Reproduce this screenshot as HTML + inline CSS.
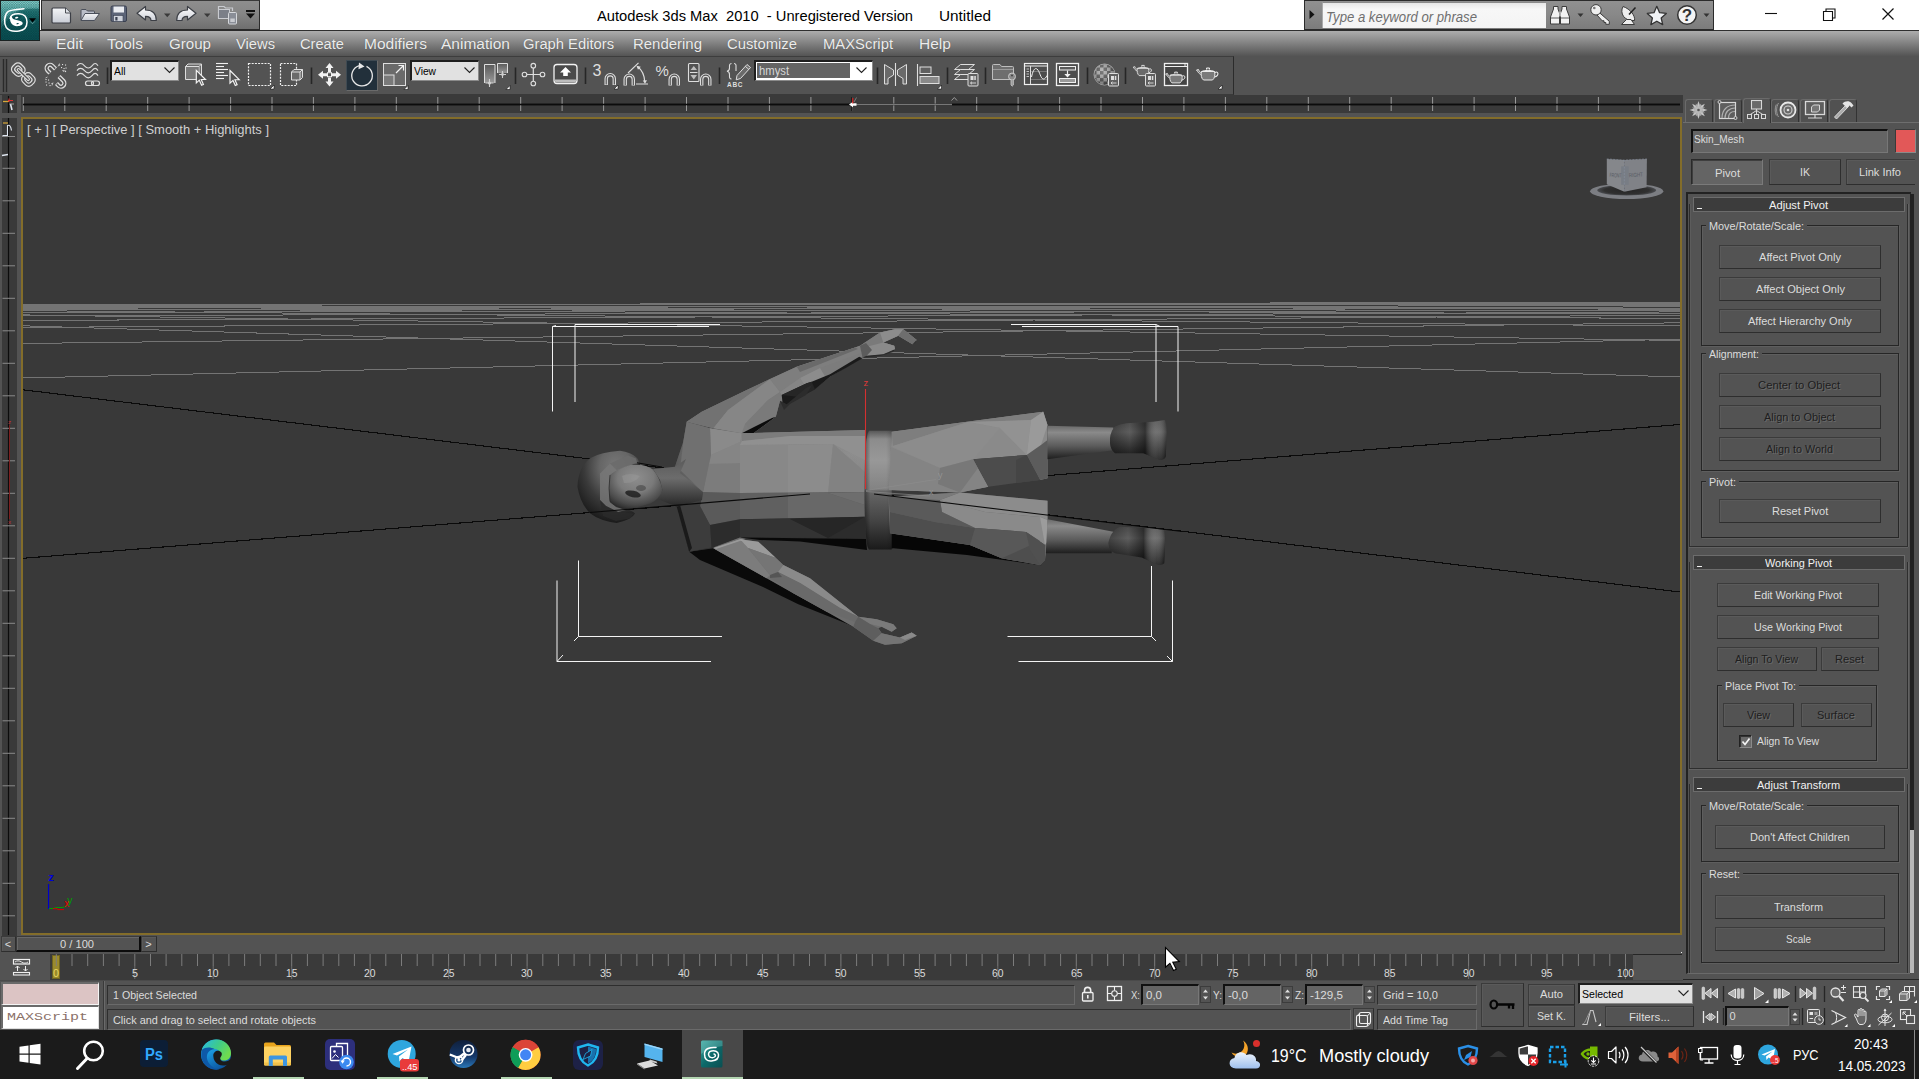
<!DOCTYPE html>
<html lang="en"><head><meta charset="utf-8"><title>Autodesk 3ds Max 2010 - Untitled</title>
<style>
html,body{margin:0;padding:0;background:#535353;overflow:hidden;}
#root{position:relative;width:1919px;height:1079px;background:#535353;overflow:hidden;font-family:"Liberation Sans",sans-serif;}
#root div,#root span.t,#root svg{position:absolute;box-sizing:border-box;}
span.t{white-space:pre;transform-origin:0 50%;}
.btn{background:#535353;border:1px solid #3b3b3b;border-right-color:#2e2e2e;border-bottom-color:#2e2e2e;box-shadow:inset 1px 1px 0 #5a5a5a;}
.grp{border:1px solid #262626;box-shadow:inset 1px 1px 0 #5e5e5e, 1px 1px 0 #5e5e5e;}
.fld{background:#646464;border:2px solid #111;border-right:1px solid #777;border-bottom:1px solid #777;}

</style></head>
<body>
<div id="root">
<div style="left:0px;top:0px;width:1919px;height:30px;background:#fff;"></div>
<div style="left:0px;top:30px;width:1919px;height:26px;background:linear-gradient(#2f2f2f 0,#2f2f2f 1px,#adadad 1px,#545454 26px);"></div>
<div style="left:0px;top:0px;width:40px;height:41px;background:#1a2222;"></div>
<div style="left:1px;top:1px;width:38px;height:39px;background:linear-gradient(180deg,#7ccfca 0%,#58b3af 14%,#2f8f8e 30%,#126467 55%,#0b5357 100%);"></div>
<svg style="left:0;top:0" width="41" height="41" viewBox="0 0 41 41">
<defs><pattern id="hx" width="2.400" height="2.400" patternUnits="userSpaceOnUse"><path d="M0 2.400L2.400 0M0 0L2.400 2.400" stroke="#062f32" stroke-width="0.450" opacity=".6"/></pattern></defs>
<path d="M1 1H39V8.500C31 8 22 9 14 14C8 18 3 24 1 30Z" fill="#a9e6e1" opacity=".30"/>
<path d="M1 24C6 16 15 10 26 8.500L39 8.500V40H1Z" fill="#064448" opacity=".35"/>
<rect x="1" y="1" width="38" height="39" fill="url(#hx)"/>
<path d="M23.900 8.800C17 9.200 10.500 9.300 7.500 12C4 15.500 3.800 24 6.300 27.500C9 31 15 31.600 19 31C24 30.300 27 27 27 22C27 17 24.500 14 19 13.700C14 13.500 10.600 15.500 10.100 18.500" fill="none" stroke="#fff" stroke-width="1.500" stroke-linecap="round"/>
<path d="M10 17.500C9.700 22.500 12.500 26.200 17 26.200C20.500 26.200 22.900 24.500 22.700 23C22.500 21.500 20 20.800 17.500 20.300C14.500 19.700 12.300 19 12 17C11.800 15.800 10.500 15.800 10 17.500Z" fill="#fff"/>
<path d="M12.200 17.800C14 15.300 18.500 14.800 21.300 16.800C19.500 19.300 15 20.300 12.200 17.800Z" fill="#0b4a4e"/>
<ellipse cx="16.700" cy="17.700" rx="1.700" ry=".9" fill="#fff" transform="rotate(-12 16.700 17.700)"/>
<ellipse cx="17.600" cy="23.600" rx="1.300" ry=".6" fill="#0b4a4e" transform="rotate(-15 17.600 23.600)"/>
<path d="M29 18.200H36L32.500 22.300Z" fill="#000"/><path d="M30 21.300L32.500 23.800L35 21.300" stroke="#cfeeee" stroke-width=".6" fill="none" opacity=".7"/>
</svg>
<div style="left:41px;top:0px;width:219px;height:31px;background:linear-gradient(#8e8e8e 0%,#868686 45%,#6f6f6f 100%);border:1px solid #2a2a2a;border-width:1px 1px 2px 1px;border-top-color:#3a3a3a;"></div>
<svg style="left:41px;top:0" width="219" height="30" viewBox="41 0 219 30">
<defs><linearGradient id="pg" x1="0" y1="0" x2="0" y2="1"><stop offset="0" stop-color="#f4f5f7"/><stop offset="1" stop-color="#c9cdd6"/></linearGradient>
<linearGradient id="ag" x1="0" y1="0" x2="0" y2="1"><stop offset="0" stop-color="#ffffff"/><stop offset="1" stop-color="#cfd2da"/></linearGradient></defs>
<!-- new -->
<path d="M52 9Q52 8 53 8H65.500L70.500 13V22Q70.500 23 69.500 23H53Q52 23 52 22Z" fill="url(#pg)" stroke="#3c3f46" stroke-width="1.200"/>
<path d="M65.500 8V13H70.500" fill="#dfe2e8" stroke="#3c3f46" stroke-width=".9"/>
<!-- open -->
<path d="M81 20V10.500Q81 9.500 82 9.500H86L87.500 11H93.500Q94.500 11 94.500 12V13.500" fill="#b9bdc8" stroke="#4a4f5a" stroke-width="1"/>
<path d="M81 20.500L85 13.500H99.500L94.500 20.500Z" fill="url(#pg)" stroke="#4a4f5a" stroke-width="1"/>
<!-- save -->
<rect x="111" y="6" width="15.500" height="15.500" rx="1.500" fill="#5c6478" stroke="#3a4050" stroke-width="1"/>
<rect x="113.500" y="6.500" width="10.500" height="6" fill="#e9ebf0"/>
<rect x="113.500" y="15.500" width="9.500" height="6" fill="#cfd3dc" stroke="#3a4050" stroke-width=".6"/>
<rect x="115.300" y="17" width="2.200" height="3.500" fill="#3a4050"/>
<!-- undo -->
<path d="M137 13.300L145.500 6.500V10C152.500 10 156.300 13.500 156.300 20.500H151C151 17.500 149.500 16.300 145.500 16.300V20Z" fill="url(#ag)" stroke="#3c3f46" stroke-width="1.200" stroke-linejoin="round"/>
<path d="M164 13.500H170.500L167.250 17.300Z" fill="#3a3a3a"/>
<!-- redo -->
<path d="M196 13.300L187.500 6.500V10C180.500 10 176.700 13.500 176.700 20.500H182C182 17.500 183.500 16.300 187.500 16.300V20Z" fill="url(#ag)" stroke="#3c3f46" stroke-width="1.200" stroke-linejoin="round"/>
<path d="M204 13.500H210.500L207.250 17.300Z" fill="#3a3a3a"/>
<!-- project folder -->
<path d="M218.500 18.500V6.500H224L225.500 8H232.500V11" fill="none" stroke="#c9cbd0" stroke-width="1.2"/>
<rect x="218.500" y="9.500" width="11" height="9" fill="#7b7f88" stroke="#c9cbd0" stroke-width="1"/>
<rect x="228.500" y="12.500" width="8" height="11.500" rx="1" fill="#8a8e97" stroke="#d6d8dc" stroke-width="1"/>
<rect x="230.300" y="18.500" width="4.500" height="3.500" fill="#c9cbd0"/>
<!-- dropdown -->
<rect x="246" y="10" width="9" height="2" fill="#111"/><path d="M246 13.500H255L250.500 18.500Z" fill="#111"/>
</svg>
<span class="t" style="left:597.00px;top:6.13px;font-size:15.5px;line-height:19px;color:#000;font-family:'Liberation Sans',sans-serif;transform:scaleX(0.9478);">Autodesk 3ds Max  2010  - Unregistered Version</span>
<span class="t" style="left:939.00px;top:6.13px;font-size:15.5px;line-height:19px;color:#000;font-family:'Liberation Sans',sans-serif;transform:scaleX(0.9895);">Untitled</span>
<div style="left:1304px;top:0px;width:410px;height:31px;background:linear-gradient(#909090,#888 50%,#7c7c7c);border:1px solid #2b2b2b;border-bottom-width:2px;"></div>
<div style="left:1322px;top:2px;width:224px;height:26px;background:linear-gradient(#e6e6e6,#f7f7f7 25%,#f4f4f4);border-top:1px solid #8a8a8a;border-left:1px solid #aaa;"></div>
<span class="t" style="left:1326.00px;top:9.15px;font-size:14px;line-height:17px;color:#6f6f6f;font-family:'Liberation Sans',sans-serif;font-style:italic;transform:scaleX(0.9390);">Type a keyword or phrase</span>
<svg style="left:1304px;top:0" width="411" height="30" viewBox="1304 0 411 30">
<path d="M1309.500 10L1314.500 14.500L1309.500 19Z" fill="#111"/>
<!-- binoculars -->
<g stroke="#3c3c3c" stroke-width="1" fill="#f2f2f2" stroke-linejoin="round">
<path d="M1553.500 9V6.500H1558V9L1559.500 13V24H1550.500V17Z"/><path d="M1562 9V6.500H1566.500V9L1569.500 17V24H1560.500V13Z"/>
<rect x="1559.300" y="11.500" width="1.500" height="5" fill="#ccc" stroke="none"/>
<path d="M1551 18H1559M1561 18H1569" stroke="#5a5a5a" stroke-width="1"/>
</g>
<path d="M1577.500 13.500H1583.500L1580.500 17Z" fill="#333"/>
<!-- key -->
<g stroke="#3c3c3c" stroke-width="1" fill="#eeeeee" stroke-linejoin="round">
<path d="M1599 12.300L1609.300 21.300V24.300H1605.800V22.500H1604V20.800H1602.200L1597 15Z"/>
<circle cx="1596" cy="9.800" r="5.200"/>
<circle cx="1594.300" cy="8" r="1.300" fill="#777" stroke="none"/>
</g>
<!-- satellite dish -->
<g stroke="#3c3c3c" stroke-width="1" fill="#eeeeee" stroke-linejoin="round">
<path d="M1623 6.500C1619.500 13 1624 21.500 1634.500 20.500C1635.500 16 1630.500 9 1623 6.500Z"/>
<path d="M1629 14.500L1635.500 7.500" stroke="#222" stroke-width="1.500" fill="none"/>
<path d="M1621.500 24.500L1626.500 19.500H1631L1634.500 24.500Z"/>
</g>
<!-- star -->
<path d="M1656.800 6.300L1659.600 12.700L1666.300 13.400L1661.200 18L1662.700 24.600L1656.800 21.200L1650.900 24.600L1652.400 18L1647.300 13.400L1654 12.700Z" fill="#f0f2f5" stroke="#333" stroke-width="1.300" stroke-linejoin="round"/>
<!-- help -->
<circle cx="1687" cy="15" r="9.300" fill="#f4f4f4" stroke="#333" stroke-width="1.500"/>
<text x="1687" y="21.300" text-anchor="middle" font-family="Liberation Sans,sans-serif" font-size="17" font-weight="bold" fill="#333">?</text>
<path d="M1703.500 13.500H1709.500L1706.500 17Z" fill="#333"/>
</svg>
<svg style="left:1740px;top:0" width="179" height="30" viewBox="1740 0 179 30">
<path d="M1765 13.500H1777" stroke="#111" stroke-width="1.100"/>
<path d="M1823.500 11.500H1832.500V20.500H1823.500Z" fill="none" stroke="#111" stroke-width="1.100"/><path d="M1826 11.500V9H1835V18H1832.500" fill="none" stroke="#111" stroke-width="1.100"/>
<path d="M1882.500 8.500L1893.500 19.500M1893.500 8.500L1882.500 19.500" stroke="#111" stroke-width="1.200"/>
</svg>
<span class="t" style="left:56.00px;top:34.13px;font-size:15.5px;line-height:19px;color:#ececec;font-family:'Liberation Sans',sans-serif;transform:scaleX(1.0109);text-shadow:0 0 1px rgba(0,0,0,.35);">Edit</span>
<span class="t" style="left:107.00px;top:34.13px;font-size:15.5px;line-height:19px;color:#ececec;font-family:'Liberation Sans',sans-serif;transform:scaleX(0.9949);text-shadow:0 0 1px rgba(0,0,0,.35);">Tools</span>
<span class="t" style="left:169.00px;top:34.13px;font-size:15.5px;line-height:19px;color:#ececec;font-family:'Liberation Sans',sans-serif;transform:scaleX(0.9750);text-shadow:0 0 1px rgba(0,0,0,.35);">Group</span>
<span class="t" style="left:236.00px;top:34.13px;font-size:15.5px;line-height:19px;color:#ececec;font-family:'Liberation Sans',sans-serif;transform:scaleX(0.9497);text-shadow:0 0 1px rgba(0,0,0,.35);">Views</span>
<span class="t" style="left:300.00px;top:34.13px;font-size:15.5px;line-height:19px;color:#ececec;font-family:'Liberation Sans',sans-serif;transform:scaleX(0.9458);text-shadow:0 0 1px rgba(0,0,0,.35);">Create</span>
<span class="t" style="left:364.00px;top:34.13px;font-size:15.5px;line-height:19px;color:#ececec;font-family:'Liberation Sans',sans-serif;text-shadow:0 0 1px rgba(0,0,0,.35);">Modifiers</span>
<span class="t" style="left:441.00px;top:34.13px;font-size:15.5px;line-height:19px;color:#ececec;font-family:'Liberation Sans',sans-serif;text-shadow:0 0 1px rgba(0,0,0,.35);">Animation</span>
<span class="t" style="left:523.00px;top:34.13px;font-size:15.5px;line-height:19px;color:#ececec;font-family:'Liberation Sans',sans-serif;transform:scaleX(0.9517);text-shadow:0 0 1px rgba(0,0,0,.35);">Graph Editors</span>
<span class="t" style="left:633.00px;top:34.13px;font-size:15.5px;line-height:19px;color:#ececec;font-family:'Liberation Sans',sans-serif;transform:scaleX(0.9648);text-shadow:0 0 1px rgba(0,0,0,.35);">Rendering</span>
<span class="t" style="left:727.00px;top:34.13px;font-size:15.5px;line-height:19px;color:#ececec;font-family:'Liberation Sans',sans-serif;transform:scaleX(0.9561);text-shadow:0 0 1px rgba(0,0,0,.35);">Customize</span>
<span class="t" style="left:823.00px;top:34.13px;font-size:15.5px;line-height:19px;color:#ececec;font-family:'Liberation Sans',sans-serif;transform:scaleX(0.9562);text-shadow:0 0 1px rgba(0,0,0,.35);">MAXScript</span>
<span class="t" style="left:919.00px;top:34.13px;font-size:15.5px;line-height:19px;color:#ececec;font-family:'Liberation Sans',sans-serif;text-shadow:0 0 1px rgba(0,0,0,.35);">Help</span>
<div style="left:0px;top:56px;width:1234px;height:39px;border-top:1px solid #3d3d3d;border-right:1px solid #2b2b2b;border-bottom:1px solid #3a3a3a;background:#535353;"></div>
<div style="left:110px;top:60px;width:69px;height:21px;background:#e1e1e1;border:2px solid #1e1e1e;border-right:1px solid #8a8a8a;border-bottom:1px solid #8a8a8a;"></div>
<span class="t" style="left:113.50px;top:63.82px;font-size:11.5px;line-height:14px;color:#000;font-family:'Liberation Sans',sans-serif;transform:scaleX(0.8998);">All</span>
<svg style="left:163px;top:66px" width="14" height="9" viewBox="0 0 14 9"><path d="M1.500 1.500L6.500 6.500L11.500 1.500" fill="none" stroke="#222" stroke-width="1.100"/></svg>
<div style="left:410px;top:60px;width:69px;height:21px;background:#e1e1e1;border:2px solid #1e1e1e;border-right:1px solid #8a8a8a;border-bottom:1px solid #8a8a8a;"></div>
<span class="t" style="left:413.50px;top:63.82px;font-size:11.5px;line-height:14px;color:#000;font-family:'Liberation Sans',sans-serif;transform:scaleX(0.8900);">View</span>
<svg style="left:463px;top:66px" width="14" height="9" viewBox="0 0 14 9"><path d="M1.500 1.500L6.500 6.500L11.500 1.500" fill="none" stroke="#222" stroke-width="1.100"/></svg>
<div style="left:754px;top:60px;width:119px;height:21px;background:#fff;border:2px solid #1e1e1e;border-right:1px solid #8a8a8a;border-bottom:1px solid #8a8a8a;"></div>
<div style="left:757px;top:63px;width:93px;height:15px;background:#646464;"></div>
<span class="t" style="left:759.00px;top:63.84px;font-size:12px;line-height:14px;color:#d6d6d6;font-family:'Liberation Sans',sans-serif;transform:scaleX(0.9374);">hmyst</span>
<svg style="left:855px;top:66px" width="14" height="9" viewBox="0 0 14 9"><path d="M1.500 1.500L6.500 6.500L11.500 1.500" fill="none" stroke="#222" stroke-width="1.100"/></svg>
<div style="left:346px;top:60px;width:32px;height:31px;background:#22303b;border:1px solid #3f4a52;border-right-color:#6a6a6a;border-bottom-color:#6a6a6a;"></div>
<svg style="left:0;top:56px" width="1240" height="40" viewBox="0 56 1240 40"><path d="M107.5 67.500V84" stroke="#262626" stroke-width="1.600"/><path d="M311.5 67.500V84" stroke="#262626" stroke-width="1.600"/><path d="M515.5 67.500V84" stroke="#262626" stroke-width="1.600"/><path d="M585.5 67.500V84" stroke="#262626" stroke-width="1.600"/><path d="M719.5 67.500V84" stroke="#262626" stroke-width="1.600"/><path d="M877.5 67.500V84" stroke="#262626" stroke-width="1.600"/><path d="M947.5 67.500V84" stroke="#262626" stroke-width="1.600"/><path d="M985.5 67.500V84" stroke="#262626" stroke-width="1.600"/><path d="M1087.5 67.500V84" stroke="#262626" stroke-width="1.600"/><path d="M1125.5 67.500V84" stroke="#262626" stroke-width="1.600"/><path d="M3.500 59V92M6.500 59V92" stroke="#2a2a2a" stroke-width="1.400"/><g transform="translate(18.3 69.6) rotate(45)"><rect x="-6.300" y="-5.800" width="12.600" height="11.600" rx="4.200" fill="none" stroke="#dedede" stroke-width="1.200"/><rect x="-3.400" y="-3" width="6.800" height="6" rx="2.400" fill="none" stroke="#dedede" stroke-width="1.200"/></g><g transform="translate(28.4 79.5) rotate(45)"><rect x="-6.300" y="-5.800" width="12.600" height="11.600" rx="4.200" fill="none" stroke="#dedede" stroke-width="1.200"/><rect x="-3.400" y="-3" width="6.800" height="6" rx="2.400" fill="none" stroke="#dedede" stroke-width="1.200"/></g><path d="M18.500 69.800L28.200 79.300" stroke="#dedede" stroke-width="3.600" stroke-linecap="round"/><path d="M18.500 69.800L28.200 79.300" stroke="#535353" stroke-width="1.300" stroke-linecap="round"/><g fill="none" stroke="#dedede" stroke-width="4.200"><path d="M50 73L47.500 70.500A3.400 3.400 0 0 1 52.300 65.700L55.500 68.900" /><path d="M59 76.500L63.500 81A3.400 3.400 0 0 1 58.700 85.800L56.500 83.600"/></g><g fill="none" stroke="#535353" stroke-width="1.600"><path d="M49.700 72.700L47.500 70.500A3.400 3.400 0 0 1 52.300 65.700L55.200 68.600" /><path d="M59.300 76.800L63.500 81A3.400 3.400 0 0 1 58.700 85.800L56.800 83.900"/></g><g fill="#dedede"><rect x="59" y="64.500" width="1.100" height="1.100"/><rect x="62" y="64" width="1.100" height="1.100"/><rect x="65" y="64.500" width="1.100" height="1.100"/><rect x="61" y="67" width="1.100" height="1.100"/><rect x="63.500" y="68" width="1.100" height="1.100"/><rect x="65.500" y="67.500" width="1.100" height="1.100"/><rect x="62.500" y="70" width="1.100" height="1.100"/><rect x="65" y="71" width="1.100" height="1.100"/><path d="M58 66.500L59.500 63.500M63 71.500L65.500 70.500" stroke="#dedede" stroke-width=".7"/><rect x="45.500" y="79" width="1.100" height="1.100"/><rect x="48" y="79.500" width="1.100" height="1.100"/><rect x="45.500" y="81.500" width="1.100" height="1.100"/><rect x="48.500" y="82.500" width="1.100" height="1.100"/><rect x="46" y="84.500" width="1.100" height="1.100"/><rect x="49.500" y="85" width="1.100" height="1.100"/><rect x="51.500" y="83" width="1.100" height="1.100"/><path d="M45.500 78L47.500 77M52 85.500L53 82.500" stroke="#dedede" stroke-width=".7"/></g><path d="M77 65.8C79 62.8 82 62.8 84.500 65.8S89.500 68.8 92 65.8S96 62.8 98 65.8" fill="none" stroke="#dedede" stroke-width="1.100"/><path d="M77 70.6C79 67.6 82 67.6 84.500 70.6S89.500 73.6 92 70.6S96 67.6 98 70.6" fill="none" stroke="#dedede" stroke-width="1.100"/><path d="M77 75.6C79 72.6 82 72.6 84.500 75.6S89.500 78.6 92 75.6S96 72.6 98 75.6" fill="none" stroke="#dedede" stroke-width="1.100"/><rect x="85.500" y="81" width="8" height="4.500" rx="2.250" fill="none" stroke="#dedede" stroke-width="1.200"/><rect x="91.500" y="81" width="8" height="4.500" rx="2.250" fill="none" stroke="#dedede" stroke-width="1.200"/><path d="M185.500 66.500L188 64H201.500V77L199 79.500H185.500Z" fill="#6a6a6a" stroke="#dedede" stroke-width="1"/><path d="M185.500 66.500H199V79.500M199 66.500L201.500 64" fill="none" stroke="#dedede" stroke-width="1"/><rect x="186" y="67" width="12.500" height="12" fill="#787878"/><path transform="translate(196.3 70.3) scale(1.15)" d="M0 0V11L2.600 8.600L4.600 13L6.200 12.300L4.300 8H8Z" fill="#535353" stroke="#f4f4f4" stroke-width="1"/><path d="M216 63.5H228" stroke="#f0f0f0" stroke-width="1.100"/><path d="M216 66.5H224" stroke="#f0f0f0" stroke-width="1.100"/><path d="M216 69.5H228" stroke="#f0f0f0" stroke-width="1.100"/><path d="M216 72.5H224" stroke="#f0f0f0" stroke-width="1.100"/><path d="M216 75.5H228" stroke="#f0f0f0" stroke-width="1.100"/><path d="M216 78.5H224" stroke="#f0f0f0" stroke-width="1.100"/><path transform="translate(230 70.5) scale(1.15)" d="M0 0V11L2.600 8.600L4.600 13L6.200 12.300L4.300 8H8Z" fill="#535353" stroke="#f4f4f4" stroke-width="1"/><rect x="248.500" y="63.500" width="22" height="22" fill="none" stroke="#f0f0f0" stroke-width="1.200" stroke-dasharray="2 1.200"/><path d="M270 89L274 85V89Z" fill="#fff" stroke="#111" stroke-width=".6"/><rect x="280.500" y="63.500" width="16" height="22" fill="none" stroke="#f0f0f0" stroke-width="1.200" stroke-dasharray="2 1.200"/><path d="M291.500 72L294 69.500H302.500V77.500L300 80H291.500Z" fill="#6a6a6a" stroke="#dedede" stroke-width="1"/><path d="M291.500 72H300V80M300 72L302.500 69.500" fill="none" stroke="#dedede" stroke-width="1"/><g fill="#f2f2f2"><path d="M329.500 63L333.500 68H331V72H328V68H325.500Z"/><path d="M329.500 86.500L333.500 81.500H331V77.500H328V81.500H325.500Z"/><path d="M318 74.700L323 70.700V73.200H327V76.200H323V78.700Z"/><path d="M341 74.700L336 70.700V73.200H332V76.200H336V78.700Z"/></g><rect x="327.500" y="72.700" width="4" height="4" fill="none" stroke="#f2f2f2" stroke-width="1"/><path d="M359.500 65.600A10.300 10.300 0 1 0 366.500 66.300" fill="none" stroke="#e8e8e8" stroke-width="1.300"/><path d="M359 62.500L364.500 66.500L358.500 69.300Z" fill="#e8e8e8"/><rect x="383.500" y="63.500" width="22" height="22" fill="#6a6a6a" stroke="#dedede" stroke-width="1"/><rect x="383.500" y="75" width="10.500" height="10.500" fill="#7a7a7a" stroke="#dedede" stroke-width="1"/><path d="M396 73L403 66M398.500 65.500H403.500V70.500" fill="none" stroke="#f2f2f2" stroke-width="1.200"/><path d="M404 89.5L408 85.5V89.5Z" fill="#fff" stroke="#111" stroke-width=".6"/><defs><linearGradient id="pv" x1="0" y1="0" x2="0" y2="1"><stop offset="0" stop-color="#5a5a5a"/><stop offset="1" stop-color="#9a9a9a"/></linearGradient></defs><path d="M484.500 83V64.500H495V83" fill="url(#pv)" stroke="#dedede" stroke-width="1"/><path d="M497.500 73V63.500H507.500V73" fill="url(#pv)" stroke="#dedede" stroke-width="1"/><path d="M489.500 79V87M485.500 83H493.500M502.500 71V78M499 74.500H506" stroke="#cfcfcf" stroke-width="1.100"/><circle cx="489.500" cy="83" r="1.600" fill="#cfcfcf"/><circle cx="502.500" cy="74.500" r="1.400" fill="#cfcfcf"/><path d="M506 89.5L510 85.5V89.5Z" fill="#fff" stroke="#111" stroke-width=".6"/><path d="M524.500 74.500H542M533.300 65.500V83.500" stroke="#dedede" stroke-width="1.200"/><g fill="#535353" stroke="#dedede" stroke-width="1.100"><circle cx="524.500" cy="74.500" r="2.300"/><circle cx="542.500" cy="74.500" r="2.300"/><circle cx="533.300" cy="65.700" r="2.300"/><circle cx="533.300" cy="83.500" r="2.300"/></g><rect x="554" y="64.500" width="23" height="19" rx="3" fill="#4a4a4a" stroke="#f2f2f2" stroke-width="1.300"/><path d="M555 79.500H576V81Q576 82.500 574.500 82.500H556.500Q555 82.500 555 81Z" fill="#bdbdbd"/><path d="M565.500 67L571 72.500H567.800V76H563.200V72.500H560Z" fill="#fff"/><text x="592.500" y="76" font-family="Liberation Sans,sans-serif" font-size="16" fill="#dedede">3</text><path d="M606.2 85.0V78.75A4.05 4.05 0 0 1 614.3 78.75V85.0" fill="none" stroke="#dedede" stroke-width="3.400"/><path d="M606.2 84.4V78.75A4.05 4.05 0 0 1 614.3 78.75V84.4" fill="none" stroke="#535353" stroke-width="1.200"/><path d="M614 89L618 85V89Z" fill="#fff" stroke="#111" stroke-width=".6"/><path d="M625.2 85.5V79.25A4.05 4.05 0 0 1 633.3 79.25V85.5" fill="none" stroke="#dedede" stroke-width="3.400"/><path d="M625.2 84.9V79.25A4.05 4.05 0 0 1 633.3 79.25V84.9" fill="none" stroke="#535353" stroke-width="1.200"/><path d="M628 73L638.500 62.800M636 84H648" stroke="#dedede" stroke-width="1.100"/><path d="M637.500 66.500C642 70 644.500 75 644.800 82" fill="none" stroke="#dedede" stroke-width="1.100"/><path d="M636.500 65.800L640.800 66.800L638 69.800ZM642.800 80.500L647 80.300L645 83.800Z" fill="#dedede"/><text x="655.500" y="76" font-family="Liberation Sans,sans-serif" font-size="15" fill="#dedede">%</text><path d="M670.2 85.5V79.25A4.05 4.05 0 0 1 678.3 79.25V85.5" fill="none" stroke="#dedede" stroke-width="3.400"/><path d="M670.2 84.9V79.25A4.05 4.05 0 0 1 678.3 79.25V84.9" fill="none" stroke="#535353" stroke-width="1.200"/><rect x="688.500" y="63.500" width="10.500" height="18" rx="1" fill="none" stroke="#dedede" stroke-width="1.100"/><path d="M690 72.500H697.500" stroke="#dedede" stroke-width="1"/><path d="M693.800 66L697 70H690.500ZM693.800 79.500L697 75H690.500Z" fill="#bdbdbd"/><path d="M701.7 85.5V79.25A4.05 4.05 0 0 1 709.8 79.25V85.5" fill="none" stroke="#dedede" stroke-width="3.400"/><path d="M701.7 84.9V79.25A4.05 4.05 0 0 1 709.8 79.25V84.9" fill="none" stroke="#535353" stroke-width="1.200"/><path d="M731.500 63.500C729 63.500 729.500 66 729.500 68C729.500 70 728.500 71 727 71.300C728.500 71.600 729.500 72.500 729.500 74.500C729.500 76.500 729 79 731.500 79M734 63.500C736.500 63.500 736 66 736 68V71" fill="none" stroke="#dedede" stroke-width="1.100"/><path d="M737 75.500L747 64.500L750.500 67.500L740.500 78.500L736.200 79.800Z" fill="#6a6a6a" stroke="#dedede" stroke-width="1"/><path d="M745.300 66.300L748.800 69.300" stroke="#dedede" stroke-width="1"/><text x="727" y="87" font-family="Liberation Sans,sans-serif" font-size="6.500" font-weight="bold" fill="#dedede" textLength="15.500">ABC</text><path d="M884.500 64.500V84H888V78.500L893.500 75V70Z" fill="#6a6a6a" stroke="#dedede" stroke-width="1"/><path d="M906.500 64.500V84H903V78.500L897.500 75V70Z" fill="#6a6a6a" stroke="#dedede" stroke-width="1"/><path d="M895.500 63V86" stroke="#dedede" stroke-width="1.100"/><path d="M917.500 64V86" stroke="#dedede" stroke-width="1.100"/><rect x="920" y="67" width="11" height="6.500" fill="#606060" stroke="#dedede" stroke-width="1"/><rect x="920" y="76.500" width="19" height="7" fill="#8a8a8a" stroke="#dedede" stroke-width="1"/><path d="M937.5 89L941.5 85V89Z" fill="#fff" stroke="#111" stroke-width=".6"/><path d="M954.500 69.5L960.500 64.5H974.500L968.500 69.5Z" fill="#5a5a5a" stroke="#dedede" stroke-width="1"/><path d="M954.500 74.5L960.500 69.5H974.500L968.500 74.5Z" fill="#5a5a5a" stroke="#dedede" stroke-width="1"/><path d="M954.500 79.5L960.500 74.5H974.500L968.500 79.5Z" fill="#5a5a5a" stroke="#dedede" stroke-width="1"/><rect x="968" y="73.5" width="10" height="12.500" rx="1" fill="#606060" stroke="#dedede" stroke-width="1"/><rect x="970.5" y="76.0" width="3" height="4" fill="#dedede"/><rect x="974.3" y="76.0" width="1.500" height="4" fill="#dedede"/><path d="M970.5 83.0H976M970.5 83.0l1.500 -1.300M970.5 83.0l1.500 1.300" stroke="#dedede" stroke-width=".9" fill="none"/><path d="M992.500 79.500V65.500Q992.500 64.500 993.500 64.500H1000L1001.500 66.500H1012.500Q1013.500 66.500 1013.500 67.500V79.500Z" fill="#6e6e6e" stroke="#bdbdbd" stroke-width="1"/><path d="M993 69.500H1013" stroke="#9a9a9a" stroke-width="1"/><circle cx="1012" cy="76.500" r="3.500" fill="#8a8a8a" stroke="#c8c8c8" stroke-width="1"/><path d="M1011 79.500V85L1012.200 86.200L1013.400 85V79.500" fill="#9a9a9a" stroke="#c8c8c8" stroke-width=".8"/><circle cx="1012" cy="75.500" r="1" fill="#444"/><rect x="1024.500" y="63.500" width="23" height="21" fill="#4c4c4c" stroke="#f0f0f0" stroke-width="1.200"/><path d="M1025 66H1047" stroke="#f0f0f0" stroke-width="1"/><path d="M1030.500 66V84" stroke="#dedede" stroke-width="1"/><path d="M1026.500 69H1029M1026.500 71.500H1029M1026.500 74H1029M1026.500 76.500H1029" stroke="#dedede" stroke-width=".8"/><path d="M1031 71.500H1047M1031 79.500H1047" stroke="#8a8a8a" stroke-width=".7"/><path d="M1031.500 77C1033 70 1035 67.500 1037 69C1040 71.500 1040.500 79 1043.500 79C1045 79 1046 77.500 1047 75.500" fill="none" stroke="#f0f0f0" stroke-width="1"/><rect x="1056.500" y="63.500" width="22" height="22" fill="#4c4c4c" stroke="#f0f0f0" stroke-width="1.300"/><rect x="1059.500" y="66.500" width="16" height="3.500" fill="#5a5a5a" stroke="#f0f0f0" stroke-width="1"/><rect x="1059.500" y="78.500" width="16" height="4" fill="#9a9a9a" stroke="#f0f0f0" stroke-width="1"/><path d="M1067.500 70.500V75" stroke="#f0f0f0" stroke-width="1.200"/><path d="M1064.300 74H1070.700L1067.500 77.500Z" fill="#f0f0f0"/><defs><pattern id="ck" width="7" height="7" patternUnits="userSpaceOnUse" patternTransform="translate(1 1)"><rect width="7" height="7" fill="#a8a8a8"/><rect width="3.500" height="3.500" fill="#505050"/><rect x="3.500" y="3.500" width="3.500" height="3.500" fill="#505050"/></pattern><radialGradient id="ckg" cx=".4" cy=".35" r=".7"><stop offset="0" stop-color="#fff" stop-opacity=".25"/><stop offset="1" stop-color="#000" stop-opacity=".35"/></radialGradient></defs><circle cx="1104.500" cy="74.500" r="10.500" fill="url(#ck)" stroke="#a8a8a8" stroke-width="1"/><circle cx="1104.500" cy="74.500" r="10.500" fill="url(#ckg)"/><rect x="1108.5" y="73.5" width="10" height="12.500" rx="1" fill="#606060" stroke="#dedede" stroke-width="1"/><rect x="1111.0" y="76.0" width="3" height="4" fill="#dedede"/><rect x="1114.8" y="76.0" width="1.500" height="4" fill="#dedede"/><path d="M1111.0 83.0H1116.5M1111.0 83.0l1.500 -1.300M1111.0 83.0l1.500 1.300" stroke="#dedede" stroke-width=".9" fill="none"/><g transform="translate(1143 70.5) scale(0.85)"><path d="M-6.500 -2.500C-7.500 1 -6.500 4.500 -4.500 6H4.500C6.500 4.500 7.500 1 6.500 -2.500Z" fill="#6a6a6a" stroke="#ececec" stroke-width="1"/><path d="M-6.500 -2.500C-4 -4 4 -4 6.500 -2.500" fill="none" stroke="#ececec" stroke-width="1"/><path d="M-1.500 -4.500V-6H1.500V-4.500" fill="#6a6a6a" stroke="#ececec" stroke-width="1"/><path d="M-6.800 0.500C-9 0 -10 -2 -11.500 -4L-9.500 -4.500C-9 -3 -8 -1.500 -6.900 -1.500" fill="#6a6a6a" stroke="#ececec" stroke-width=".9"/><path d="M6.800 -1.500C10.500 -3.500 11.500 1.500 6.500 3" fill="none" stroke="#ececec" stroke-width="1.100"/></g><rect x="1145.5" y="73.5" width="10" height="12.500" rx="1" fill="#606060" stroke="#dedede" stroke-width="1"/><rect x="1148.0" y="76.0" width="3" height="4" fill="#dedede"/><rect x="1151.8" y="76.0" width="1.500" height="4" fill="#dedede"/><path d="M1148.0 83.0H1153.5M1148.0 83.0l1.500 -1.300M1148.0 83.0l1.500 1.300" stroke="#dedede" stroke-width=".9" fill="none"/><rect x="1164.500" y="63.500" width="23" height="22" fill="#444" stroke="#f0f0f0" stroke-width="1.300"/><path d="M1165 66.500H1187" stroke="#f0f0f0" stroke-width="1"/><circle cx="1185" cy="65" r=".8" fill="#fff"/><g transform="translate(1176 77.5) scale(0.9)"><path d="M-6.500 -2.500C-7.500 1 -6.500 4.500 -4.500 6H4.500C6.500 4.500 7.500 1 6.500 -2.500Z" fill="#7a7a7a" stroke="#ececec" stroke-width="1"/><path d="M-6.500 -2.500C-4 -4 4 -4 6.500 -2.500" fill="none" stroke="#ececec" stroke-width="1"/><path d="M-1.500 -4.500V-6H1.500V-4.500" fill="#7a7a7a" stroke="#ececec" stroke-width="1"/><path d="M-6.800 0.500C-9 0 -10 -2 -11.500 -4L-9.500 -4.500C-9 -3 -8 -1.500 -6.900 -1.500" fill="#7a7a7a" stroke="#ececec" stroke-width=".9"/><path d="M6.800 -1.500C10.500 -3.500 11.500 1.500 6.500 3" fill="none" stroke="#ececec" stroke-width="1.100"/></g><g transform="translate(1208 74) scale(1.0)"><path d="M-6.500 -2.500C-7.500 1 -6.500 4.500 -4.500 6H4.500C6.500 4.500 7.500 1 6.500 -2.500Z" fill="#7a7a7a" stroke="#ececec" stroke-width="1"/><path d="M-6.500 -2.500C-4 -4 4 -4 6.500 -2.500" fill="none" stroke="#ececec" stroke-width="1"/><path d="M-1.500 -4.500V-6H1.500V-4.500" fill="#7a7a7a" stroke="#ececec" stroke-width="1"/><path d="M-6.800 0.500C-9 0 -10 -2 -11.500 -4L-9.500 -4.500C-9 -3 -8 -1.500 -6.900 -1.500" fill="#7a7a7a" stroke="#ececec" stroke-width=".9"/><path d="M6.800 -1.500C10.500 -3.500 11.500 1.500 6.500 3" fill="none" stroke="#ececec" stroke-width="1.100"/></g><path d="M1218 89L1222 85V89Z" fill="#fff" stroke="#111" stroke-width=".6"/></svg>
<div style="left:21px;top:95px;width:1662px;height:18px;background:#3a3a3a;"></div>
<div style="left:2px;top:95px;width:15px;height:18px;background:#3a3a3a;"></div>
<div style="left:2px;top:118px;width:15px;height:818px;background:#3a3a3a;"></div>
<svg style="left:0;top:95px" width="1690" height="845" viewBox="0 95 1690 845"><path d="M23 104.500H1680" stroke="#0c0c0c" stroke-width="1.400"/><path d="M23.3 97V111M64.8 97V111M106.2 97V111M147.7 97V111M189.1 97V111M230.6 97V111M272.0 97V111M313.4 97V111M354.9 97V111M396.3 97V111M437.8 97V111M479.2 97V111M520.7 97V111M562.1 97V111M603.6 97V111M645.1 97V111M686.5 97V111M728.0 97V111M769.4 97V111M810.9 97V111M852.3 97V111M893.8 97V111M935.2 97V111M976.7 97V111M1018.1 97V111M1059.6 97V111M1101.0 97V111M1142.5 97V111M1183.9 97V111M1225.4 97V111M1266.8 97V111M1308.3 97V111M1349.7 97V111M1391.2 97V111M1432.6 97V111M1474.1 97V111M1515.5 97V111M1557.0 97V111M1598.4 97V111M1639.9 97V111" stroke="#9a9a9a" stroke-width="1"/><path d="M23 104.500H1680" stroke="#0c0c0c" stroke-width="1.400"/><path d="M852 104.500H952" stroke="#777" stroke-width="1.400"/><path d="M851.900 97V111" stroke="#0c0c0c" stroke-width="1.300"/><path d="M849 104.500L853 101.800V103.300H856.500V105.700H853V107.200Z" fill="#fff"/><path d="M852.800 98V103.500" stroke="#e01818" stroke-width="1.100"/><path d="M854 102L856.500 97.500" stroke="#8a8a8a" stroke-width=".8"/><path d="M951.500 100.500L954.300 97.500L957 100.500" fill="none" stroke="#9a9a9a" stroke-width="1"/><path d="M8.500 96V113M8.500 118V935" stroke="#0c0c0c" stroke-width="1.200"/><path d="M2.500 168.3H15M2.500 200.8H15M2.500 233.3H15M2.500 265.8H15M2.500 298.3H15M2.500 330.8H15M2.500 363.3H15M2.500 395.8H15M2.500 428.3H15M2.500 460.8H15M2.500 493.3H15M2.500 525.8H15M2.500 558.3H15M2.500 590.8H15M2.500 623.3H15M2.500 655.8H15M2.500 688.3H15M2.500 720.8H15M2.500 753.3H15M2.500 785.8H15M2.500 818.3H15M2.500 850.8H15M2.500 883.3H15M2.500 915.8H15" stroke="#8a8a8a" stroke-width="1"/><path d="M3 101.500H9" stroke="#d8a83a" stroke-width="1.300"/><path d="M9 98.500V102M8 100.500H13" stroke="#e03030" stroke-width="1"/><path d="M10.500 104L12 110" stroke="#dfe6f0" stroke-width="1.600"/><path d="M9.500 104H14" stroke="#bbb" stroke-width=".8"/><path d="M3 123H8" stroke="#d8a83a" stroke-width="1.200"/><path d="M2.500 135.500H7.500V125.500Q10.500 124 11.500 130.500" fill="none" stroke="#dfe6f0" stroke-width="1.100"/><path d="M2 136.500H15" stroke="#8a8a8a" stroke-width="1"/><path d="M2 155.500L8 154.500" stroke="#dfe6f0" stroke-width="1.400"/><text x="8" y="424" font-family="Liberation Sans,sans-serif" font-size="6" fill="#c83030">z</text><text x="8" y="524" font-family="Liberation Sans,sans-serif" font-size="6" fill="#c83030">x</text><path d="M9.500 425V519" stroke="#7a2020" stroke-width="1"/></svg>
<div style="left:21px;top:117px;width:1661px;height:818px;background:#393939;border:2px solid #836d2a;"></div>
<svg style="left:23px;top:119px" width="1657" height="814" viewBox="23 119 1657 814" shape-rendering="crispEdges"><path d="M23 378.0L1680 339.2" stroke="#747474" stroke-width="1"/><path d="M23 343.5L1680 322.8" stroke="#747474" stroke-width="1"/><path d="M23 327.5L1680 315.2" stroke="#747474" stroke-width="1"/><path d="M23 320.5L1680 311.9" stroke="#747474" stroke-width="1"/><path d="M23 316.0L1680 309.7" stroke="#747474" stroke-width="1"/><path d="M23 312.5L1680 308.0" stroke="#747474" stroke-width="1"/><path d="M23 310.0L1680 306.9" stroke="#747474" stroke-width="1"/><path d="M23 307.5L1680 305.7" stroke="#747474" stroke-width="1"/><path d="M23 325.8L1680 377.0" stroke="#747474" stroke-width="1"/><path d="M23 314.9L1680 340.5" stroke="#747474" stroke-width="1"/><path d="M23 310.6L1680 326.0" stroke="#747474" stroke-width="1"/><path d="M23 308.3L1680 318.5" stroke="#747474" stroke-width="1"/><path d="M23 307.0L1680 314.0" stroke="#747474" stroke-width="1"/><path d="M23 306.1L1680 311.0" stroke="#747474" stroke-width="1"/><path d="M23 305.4L1680 308.8" stroke="#747474" stroke-width="1"/><path d="M23 304.5H1680" stroke="#747474" stroke-width="1"/><path d="M640 303.5H1680" stroke="#747474" stroke-width="1"/><path d="M1270 302.5H1680" stroke="#747474" stroke-width="1"/><path d="M23 389.800L1680 592" stroke="#0a0a0a" stroke-width="1.100"/><path d="M23 558.300L1680 424.500" stroke="#0a0a0a" stroke-width="1.100"/></svg>
<span class="t" style="left:27.00px;top:123.17px;font-size:12.5px;line-height:15px;color:#d0d0d0;font-family:'Liberation Sans',sans-serif;transform:scaleX(1.0367);">[ + ] [ Perspective ] [ Smooth + Highlights ]</span>
<svg style="left:23px;top:119px" width="1657" height="814" viewBox="23 119 1657 814"><defs>
<linearGradient id="gHair" x1="0" y1="0" x2="1" y2="0"><stop offset="0" stop-color="#2e2e2e"/><stop offset=".45" stop-color="#6a6a6a"/><stop offset="1" stop-color="#757575"/></linearGradient>
<linearGradient id="gHairV" x1="0" y1="0" x2="0" y2="1"><stop offset="0" stop-color="#000" stop-opacity="0"/><stop offset=".6" stop-color="#000" stop-opacity=".1"/><stop offset="1" stop-color="#000" stop-opacity=".6"/></linearGradient>
<linearGradient id="gFace" x1="0" y1="0" x2="0" y2="1"><stop offset="0" stop-color="#6e6e6e"/><stop offset=".4" stop-color="#808080"/><stop offset=".75" stop-color="#5a5a5a"/><stop offset="1" stop-color="#2a2a2a"/></linearGradient>
<linearGradient id="gNeck" x1="0" y1="0" x2="0" y2="1"><stop offset="0" stop-color="#5a5a5a"/><stop offset=".4" stop-color="#6c6c6c"/><stop offset="1" stop-color="#262626"/></linearGradient>
<linearGradient id="gBelt" x1="0" y1="0" x2="0" y2="1"><stop offset="0" stop-color="#585858"/><stop offset=".07" stop-color="#8c8c8c"/><stop offset=".25" stop-color="#989898"/><stop offset=".49" stop-color="#838383"/><stop offset=".51" stop-color="#666"/><stop offset=".75" stop-color="#454545"/><stop offset="1" stop-color="#1a1a1a"/></linearGradient>
<linearGradient id="gBeltH" x1="0" y1="0" x2="1" y2="0"><stop offset="0" stop-color="#000" stop-opacity=".4"/><stop offset=".22" stop-color="#000" stop-opacity="0"/><stop offset=".8" stop-color="#000" stop-opacity="0"/><stop offset="1" stop-color="#000" stop-opacity=".12"/></linearGradient>
<linearGradient id="gLeg" x1="0" y1="0" x2="0" y2="1"><stop offset="0" stop-color="#6a6a6a"/><stop offset=".2" stop-color="#8a8a8a"/><stop offset=".6" stop-color="#5c5c5c"/><stop offset="1" stop-color="#1e1e1e"/></linearGradient>
<linearGradient id="gBoot" x1="0" y1="0" x2="0" y2="1"><stop offset="0" stop-color="#4a4a4a"/><stop offset=".3" stop-color="#5e5e5e"/><stop offset=".7" stop-color="#333"/><stop offset="1" stop-color="#141414"/></linearGradient>
<linearGradient id="gBootH" x1="0" y1="0" x2="1" y2="0"><stop offset="0" stop-color="#000" stop-opacity=".3"/><stop offset=".35" stop-color="#000" stop-opacity="0"/><stop offset=".62" stop-color="#000" stop-opacity=".45"/><stop offset=".85" stop-color="#fff" stop-opacity=".12"/><stop offset="1" stop-color="#000" stop-opacity=".3"/></linearGradient>
<linearGradient id="gShirt" x1="0" y1="0" x2="0" y2="1"><stop offset="0" stop-color="#7a7a7a"/><stop offset=".25" stop-color="#8e8e8e"/><stop offset=".55" stop-color="#808080"/><stop offset=".62" stop-color="#5e5e5e"/><stop offset=".8" stop-color="#484848"/><stop offset="1" stop-color="#2c2c2c"/></linearGradient>
<linearGradient id="gShirtH" x1="0" y1="0" x2="1" y2="0"><stop offset="0" stop-color="#000" stop-opacity=".35"/><stop offset=".2" stop-color="#000" stop-opacity=".08"/><stop offset=".5" stop-color="#fff" stop-opacity=".04"/><stop offset="1" stop-color="#000" stop-opacity="0"/></linearGradient>
<linearGradient id="gArmU" x1="0" y1="0" x2="0" y2="1"><stop offset="0" stop-color="#6c6c6c"/><stop offset=".5" stop-color="#858585"/><stop offset="1" stop-color="#707070"/></linearGradient>
</defs><polygon points="686.7,421.7 701.7,411.7 746.7,390.0 796.7,366.7 855.0,347.5 860.0,345.8 880.0,332.5 895.0,329.2 903.3,329.2 916.7,340.0 912.5,344.2 898.3,335.8 883.3,342.5 894.2,345.8 895.0,349.2 883.3,354.2 866.7,355.8 862.5,357.5 830.0,376.7 813.3,390.0 786.7,404.2 780.0,400.8 775.8,416.7 753.3,433.3 741.7,433.3 713.3,428.3" fill="#7c7c7c" /><polygon points="686.7,421.7 701.7,411.7 746.7,390.0 770.0,379.0 728.0,410.0 713.3,428.3" fill="#727272" /><polygon points="728.0,410.0 770.0,379.0 780.0,392.0 768.0,400.0 745.0,424.0 741.7,433.3 713.3,428.3" fill="#868686" /><polygon points="768.0,400.0 780.0,392.0 786.7,404.2 780.0,400.8 775.8,416.7 753.3,433.3 745.0,424.0" fill="#7a7a7a" /><polygon points="770.0,379.0 796.7,366.7 855.0,347.5 860.0,345.8 864.0,352.0 820.0,368.0 800.0,378.0 780.0,392.0" fill="#7e7e7e" /><polygon points="796.7,366.7 855.0,347.5 858.0,349.0 800.0,372.0" fill="#6a6a6a" /><polygon points="800.0,378.0 820.0,368.0 826.0,378.0 806.0,388.0" fill="#8c8c8c" /><polygon points="780.0,392.0 800.0,378.0 806.0,388.0 786.7,404.2" fill="#858585" /><polygon points="781.7,395.0 806.7,383.3 811.7,381.7 830.0,374.2 859.2,356.7 862.5,358.3 846.7,367.5 830.0,376.7 815.0,389.2 786.7,405.0 782.5,402.5" fill="#1a1a1a" /><polygon points="781.7,395.0 806.7,383.3 811.7,381.7 815.0,389.2 800.0,397.0" fill="#262626" /><polygon points="780.0,400.8 786.7,404.2 806.0,388.0 812.0,385.0 806.0,395.0 790.0,404.0 784.0,410.0" fill="#2c2c2c" /><polygon points="741.7,433.3 753.3,433.3 775.8,416.7 772.0,418.0" fill="#0c0c0c" /><polygon points="860.0,345.8 880.0,332.5 895.0,329.2 903.3,329.2 916.7,340.0 912.5,344.2 898.3,335.8 883.3,342.5 894.2,345.8 895.0,349.2 883.3,354.2 866.7,355.8 862.5,357.5" fill="#7a7a7a" /><polygon points="880.0,332.5 895.0,329.2 903.3,329.2 898.3,335.8 883.3,342.5" fill="#8c8c8c" /><polygon points="903.3,329.2 916.7,340.0 912.5,344.2 898.3,335.8" fill="#6e6e6e" /><polygon points="912.5,344.2 916.7,340.0 915.5,343.0" fill="#333" /><polygon points="862.0,348.0 883.3,342.5 894.2,345.8 895.0,349.2 883.3,354.2 866.7,355.8" fill="#8a8a8a" /><polygon points="862.0,350.0 866.7,355.8 883.3,354.2 895.0,349.2 893.0,352.0 880.0,356.0 864.0,357.5" fill="#2a2a2a" /><polygon points="860.0,345.8 866.0,343.0 872.0,350.0 866.7,355.8 862.5,357.5" fill="#5c5c5c" /><polygon points="689.2,551.7 713.3,548.3 766.7,578.3 793.3,593.3 826.7,611.7 853.3,626.7 848.3,624.2 798.3,604.2 762.5,586.7 700.0,560.0" fill="#0a0a0a" /><polygon points="713.3,548.3 740.0,539.2 758.3,541.7 783.3,565.0 810.0,578.3 858.3,616.7 876.7,619.2 893.3,624.2 896.7,628.3 891.7,631.7 881.7,626.7 878.3,628.3 881.7,633.3 900.0,637.5 911.7,632.5 916.7,635.8 901.7,643.3 885.0,644.7 873.3,640.8 853.3,626.7 826.7,611.7 793.3,593.3 766.7,578.3" fill="#6e6e6e" /><polygon points="713.3,548.3 740.0,539.2 748.0,548.0 770.0,575.0 766.7,578.3" fill="#7c7c7c" /><polygon points="740.0,539.2 758.3,541.7 776.0,558.0 748.0,548.0" fill="#9a9a9a" /><polygon points="748.0,548.0 776.0,558.0 783.3,565.0 778.0,572.0 770.0,575.0" fill="#757575" /><polygon points="783.3,565.0 810.0,578.3 858.3,616.7 840.0,608.0 800.0,583.0 778.0,572.0" fill="#8a8a8a" /><polygon points="778.0,572.0 800.0,583.0 840.0,608.0 858.3,616.7 855.0,622.0 826.7,611.7 793.3,593.3 770.0,578.0" fill="#6a6a6a" /><polygon points="770.0,575.0 778.0,572.0 782.0,577.0 770.0,578.0" fill="#555" /><polygon points="858.3,616.7 876.7,619.2 893.3,624.2 896.7,628.3 891.7,631.7 881.7,626.7 870.0,624.0" fill="#7a7a7a" /><polygon points="855.0,622.0 858.3,616.7 870.0,624.0 878.3,628.3 881.7,633.3 873.3,640.8 853.3,626.7" fill="#5e5e5e" /><polygon points="881.7,633.3 900.0,637.5 911.7,632.5 916.7,635.8 901.7,643.3 885.0,644.7 873.3,640.8" fill="#747474" /><polygon points="900.0,637.5 911.7,632.5 916.7,635.8 905.0,640.0" fill="#8a8a8a" /><polygon points="686.7,421.7 710.0,428.3 741.7,433.3 865.0,430.0 866.0,540.0 740.0,538.3 713.3,547.5 689.2,551.7 676.7,506.7 675.0,466.7 683.3,441.7" fill="url(#gShirt)" /><polygon points="686.7,421.7 710.0,428.3 741.7,433.3 865.0,430.0 866.0,540.0 740.0,538.3 713.3,547.5 689.2,551.7 676.7,506.7 675.0,466.7 683.3,441.7" fill="url(#gShirtH)" /><polygon points="710.0,428.3 741.7,433.3 740.0,442.0 711.0,455.0" fill="#8a8a8a" /><polygon points="741.7,433.3 865.0,430.0 865.0,436.0 790.0,436.0 742.0,441.0" fill="#7c7c7c" /><polygon points="742.0,441.0 790.0,436.0 865.0,436.0 865.0,460.0 833.0,444.0 740.0,445.0" fill="#909090" /><polygon points="711.0,455.0 740.0,442.0 740.0,463.0 709.0,464.0" fill="#858585" /><polygon points="740.0,445.0 833.0,444.0 865.0,472.0 865.0,492.0 740.0,493.0" fill="#888888" /><polygon points="788.0,445.0 833.0,444.0 828.0,493.0 788.0,493.0" fill="#8c8c8c" /><polygon points="833.0,444.0 865.0,472.0 865.0,492.0 828.0,493.0" fill="#828282" /><polygon points="709.0,464.0 740.0,463.0 740.0,493.0 703.0,492.0" fill="#7c7c7c" /><polygon points="686.7,421.7 710.0,428.3 711.0,455.0 709.0,464.0 703.0,492.0 680.0,470.0 683.3,441.7" fill="#707070" /><polygon points="703.0,492.0 740.0,493.0 865.0,492.0 865.0,517.0 740.0,519.0 710.0,525.0 700.0,506.0" fill="#5a5a5a" /><polygon points="740.0,493.0 788.0,493.0 788.0,519.0 740.0,519.0" fill="#606060" /><polygon points="788.0,493.0 828.0,493.0 865.0,505.0 865.0,517.0 788.0,519.0" fill="#686868" /><polygon points="828.0,493.0 865.0,492.0 865.0,505.0" fill="#6e6e6e" /><polygon points="700.0,506.0 710.0,525.0 711.7,547.5 689.2,551.7 676.7,506.7 690.0,495.0 703.0,492.0" fill="#3c3c3c" /><polygon points="740.0,519.2 865.0,516.7 866.0,539.2 740.0,537.5 711.7,547.5 710.0,525.0" fill="#2c2c2c" /><polygon points="740.0,519.2 790.0,519.0 828.0,538.0 740.0,537.5" fill="#333" /><polygon points="790.0,519.0 865.0,516.7 828.0,538.0" fill="#262626" /><polygon points="676.7,506.7 680.0,505.0 692.0,548.0 689.2,551.7" fill="#1a1a1a" /><polygon points="740.0,537.5 866.0,539.0 867.0,550.0 800.0,541.5 760.0,540.0" fill="#080808" /><polygon points="713.3,547.5 740.0,537.5 746.0,539.0 716.0,549.0" fill="#d0d0d0" opacity=".35"/><polygon points="653.0,469.0 675.0,466.7 686.0,459.0 680.0,473.0 703.0,492.0 702.0,500.0 676.7,506.7 658.0,499.0 662.5,490.0 660.0,480.0" fill="url(#gNeck)" /><defs><radialGradient id="rHair" cx=".62" cy=".22" r=".85"><stop offset="0" stop-color="#787878"/><stop offset=".3" stop-color="#666"/><stop offset=".6" stop-color="#3a3a3a"/><stop offset="1" stop-color="#121212"/></radialGradient><radialGradient id="rFace" cx=".5" cy=".3" r=".75"><stop offset="0" stop-color="#8e8e8e"/><stop offset=".45" stop-color="#7a7a7a"/><stop offset=".8" stop-color="#4a4a4a"/><stop offset="1" stop-color="#262626"/></radialGradient></defs><path d="M590 458.300Q601 452 620 450.800Q631 452 637 458Q639.500 461 638.500 463.500L630 465.300Q616 470 610 476Q608 490 610 501.700Q617 507.500 626 509Q633 511 635 513.500Q632 519.500 616.700 523Q600 521 590 513.300Q580 503 577.500 486.700Q578 468 590 458.300Z" fill="url(#rHair)"/><polygon points="600.0,473.5 610.0,463.5 616.7,470.0 610.0,475.0 609.2,490.0 610.0,501.7 616.0,507.0 626.0,510.0 618.0,512.0 606.0,506.0 600.0,500.0" fill="#787878" opacity=".8"/><polygon points="610.0,463.5 628.0,455.5 636.0,458.5 637.0,462.5 630.0,465.3 616.7,470.0" fill="#6c6c6c" opacity=".9"/><polygon points="600.0,500.0 606.0,506.0 618.0,512.0 634.0,513.5 630.0,518.5 616.0,521.0 603.0,516.0" fill="#2a2a2a" opacity=".8"/><path d="M610 475Q618 468.500 630 465Q643 463 653 469.500Q660 478 662.500 490Q660 499 650 503.800Q638 507.500 626.700 509Q616 507.500 610 501.700Q608 488 610 475Z" fill="url(#rFace)"/><path d="M610 475Q608 488 610 501.700Q616 507.500 626.700 509" fill="none" stroke="#2a2a2a" stroke-width="1" opacity=".7"/><ellipse cx="633" cy="494" rx="8" ry="3.200" fill="#1a1a1a" opacity=".8" transform="rotate(12 633 494)"/><ellipse cx="641" cy="488" rx="5" ry="3" fill="#3a3a3a" opacity=".5"/><path d="M622 476Q630 472 640 476Q634 484 624 483Z" fill="#9a9a9a" opacity=".45"/><polygon points="889.0,533.3 970.0,545.0 1001.7,558.3 1043.0,565.5 1036.0,564.5 967.0,555.0 893.3,548.3 889.0,549.0" fill="#060606" /><path d="M869 430.800H891.700V549.500H869Q864.500 545 864.500 490Q864.500 436 869 430.800Z" fill="url(#gBelt)"/><path d="M869 430.800H891.700V549.500H869Q864.500 545 864.500 490Q864.500 436 869 430.800Z" fill="url(#gBeltH)"/><polygon points="891.7,431.7 1043.3,411.7 1047.5,425.0 1047.5,478.3 1040.0,480.0 1026.7,455.0 973.3,459.2 988.3,486.7 960.0,492.5 889.2,490.0" fill="#8a8a8a" /><polygon points="891.7,431.7 1043.3,411.7 1031.0,420.0 968.0,422.0 893.0,446.0" fill="#7e7e7e" /><polygon points="968.0,422.0 1031.0,420.0 1026.7,455.0 1000.0,428.0" fill="#929292" /><polygon points="1031.0,420.0 1043.3,411.7 1047.5,425.0 1041.0,445.0 1026.7,455.0" fill="#9a9a9a" /><polygon points="893.0,446.0 968.0,422.0 1000.0,428.0 973.3,459.2 940.0,468.0 893.0,447.0" fill="#8c8c8c" /><polygon points="891.0,447.0 940.0,468.0 973.3,459.2 988.3,486.7 960.0,492.5 889.2,490.0" fill="#848484" /><polygon points="940.0,468.0 973.3,459.2 978.0,468.0 960.0,492.5 938.0,484.0" fill="#787878" /><polygon points="973.3,459.2 1026.7,455.0 1040.0,480.0 1016.0,483.0 988.3,486.7" fill="#4c4c4c" /><polygon points="973.3,459.2 988.3,486.7 978.0,468.0" fill="#5e5e5e" /><polygon points="1026.7,455.0 1041.0,445.0 1047.5,440.0 1047.5,478.3 1040.0,480.0" fill="#5c5c5c" /><polygon points="1016.0,460.0 1026.7,455.0 1040.0,480.0 1016.0,483.0" fill="#454545" /><polygon points="888.3,496.7 960.0,492.5 1047.5,500.8 1047.5,541.7 1045.0,560.0 1040.0,565.0 1001.7,558.3 970.0,545.0 890.0,533.3" fill="#6a6a6a" /><polygon points="960.0,492.5 1047.5,500.8 1047.5,520.0 1040.0,517.0 985.0,512.0 940.0,500.0" fill="#8c8c8c" /><polygon points="940.0,500.0 985.0,512.0 1040.0,517.0 1047.5,520.0 1045.0,545.0 1026.0,532.0 975.0,528.0 942.0,512.0" fill="#8a8a8a" /><polygon points="1040.0,517.0 1047.5,520.0 1047.5,541.7 1045.0,545.0" fill="#9c9c9c" /><polygon points="888.3,496.7 940.0,500.0 942.0,512.0 975.0,528.0 935.0,522.0 890.0,512.0" fill="#5a5a5a" /><polygon points="890.0,512.0 935.0,522.0 975.0,528.0 1026.0,532.0 1045.0,545.0 1045.0,560.0 1040.0,565.0 1001.7,558.3 970.0,545.0 890.0,533.3" fill="#4e4e4e" /><polygon points="975.0,528.0 1026.0,532.0 1040.0,541.0 1001.7,558.3 970.0,545.0" fill="#585858" /><polygon points="1026.0,532.0 1045.0,545.0 1045.0,560.0 1040.0,565.0 1030.0,550.0" fill="#505050" /><polygon points="888.3,496.7 960.0,492.5 940.0,500.0" fill="#7a7a7a" /><polygon points="1047.5,425.8 1113.3,427.5 1115.0,450.0 1047.5,459.2" fill="url(#gLeg)" /><polygon points="1047.5,519.2 1113.3,531.7 1111.7,553.3 1045.8,553.3" fill="url(#gLeg)" /><path d="M1110 438.300Q1111 430 1115 426.700Q1120 424 1126.700 423.300L1153.300 421.700L1165 420Q1167 426 1166.700 433.300L1165.800 456.700Q1164 460 1160 460L1143.300 453.300H1115Q1110.500 450 1110 443.300Z" fill="url(#gBoot)"/><path d="M1110 438.300Q1111 430 1115 426.700Q1120 424 1126.700 423.300L1153.300 421.700L1165 420Q1167 426 1166.700 433.300L1165.800 456.700Q1164 460 1160 460L1143.300 453.300H1115Q1110.500 450 1110 443.300Z" fill="url(#gBootH)"/><path d="M1108.300 543.300Q1110 535 1113.300 531.700Q1116 528 1120 526.700L1151.700 528.300L1164.200 530Q1165.500 540 1165 550L1164.200 563.300Q1162 565.500 1158.300 565L1141.700 557.500L1115 553.300Q1110 551 1109.200 548.300Z" fill="url(#gBoot)"/><path d="M1108.300 543.300Q1110 535 1113.300 531.700Q1116 528 1120 526.700L1151.700 528.300L1164.200 530Q1165.500 540 1165 550L1164.200 563.300Q1162 565.500 1158.300 565L1141.700 557.500L1115 553.300Q1110 551 1109.200 548.300Z" fill="url(#gBootH)"/><path d="M590 512.500L810 494" stroke="#0a0a0a" stroke-width="1.100"/><path d="M874 494L1180 531.300" stroke="#0a0a0a" stroke-width="1.100"/><path d="M637 462.800L662 467" stroke="#0a0a0a" stroke-width="1"/><path d="M866 490.500L936 479.500M866 491.500L930 496" stroke="#8e8e8e" stroke-width=".8" opacity=".8"/><text x="938" y="478" font-family="Liberation Sans,sans-serif" font-size="9" fill="#9a9a9a" opacity=".8">y</text><text x="929" y="495" font-family="Liberation Sans,sans-serif" font-size="9" fill="#9a9a9a" opacity=".8">x</text><path d="M865.500 389V489" stroke="#d43030" stroke-width="1.100"/><text x="863.500" y="386" font-family="Liberation Sans,sans-serif" font-size="9.500" fill="#e03a3a">z</text><path d="M552.500 411.500V326.500H709M575 402V324.500H720M552.500 326.500L556 325.500M1011 324.500H1156V402M1022 326.500H1178V411.500M1156 324.500L1160 326.500M578.500 560.500V636.500H722M557 580.500V661.500H711M557 661.500L563 655M578.500 636.500L574 641M1007.500 636.500H1151.500V566M1018.500 661.500H1172.500V580.500M1172.500 661.500L1167 656M1151.500 636.500L1156 641" fill="none" stroke="#f4f4f4" stroke-width="1"/></svg>
<svg style="left:1585px;top:150px" width="85" height="55" viewBox="1585 150 85 55"><defs><radialGradient id="vcr" cx=".5" cy=".5" r=".5"><stop offset="0" stop-color="#262626"/><stop offset=".75" stop-color="#303030"/><stop offset="1" stop-color="#4a4c50"/></radialGradient></defs>
<ellipse cx="1626.700" cy="191.300" rx="36.600" ry="7.700" fill="#7c7e83"/>
<ellipse cx="1626.700" cy="190.200" rx="29.500" ry="5.300" fill="url(#vcr)"/>
<polygon points="1606.800,158.900 1624.300,160.100 1624.300,191.700 1606.800,184.200" fill="#85878b"/>
<polygon points="1624.300,160.100 1646.900,158.900 1646.600,187.200 1624.300,191.700" fill="#808287"/>
<rect x="1621.200" y="166.300" width="7.500" height="18.500" fill="#787d85"/>
<path d="M1606.800 158.900L1624.300 160.100L1646.900 158.900M1624.300 160.100V191.700" fill="none" stroke="#8a93a3" stroke-width=".7" stroke-dasharray="2 1.200" opacity=".8"/>
<text x="1609.500" y="176.800" font-family="Liberation Sans,sans-serif" font-size="5.800" fill="#565a62" textLength="12" lengthAdjust="spacingAndGlyphs" transform="rotate(4 1609 176)">FRONT</text>
<text x="1629" y="177.200" font-family="Liberation Sans,sans-serif" font-size="5.800" fill="#565a62" textLength="14" lengthAdjust="spacingAndGlyphs" transform="rotate(-3 1629 177)">RIGHT</text></svg>
<svg style="left:40px;top:870px" width="40" height="45" viewBox="40 870 40 45">
<path d="M48.550 884V909" stroke="#0000c8" stroke-width="1.200"/>
<text x="48.300" y="881" font-family="Liberation Sans,sans-serif" font-size="11.500" font-weight="bold" fill="#0000d8">z</text>
<path d="M49 908.500L53 908.500L57 907.500H62.500L66.500 906" fill="none" stroke="#00a000" stroke-width="1"/>
<path d="M53 908.700H57L58 909.600H64" fill="none" stroke="#d80000" stroke-width="1"/>
<text x="64.200" y="906.800" font-family="Liberation Sans,sans-serif" font-size="10" fill="#e80000">x</text>
<text x="67.300" y="903.500" font-family="Liberation Sans,sans-serif" font-size="10.500" fill="#00a000">y</text>
</svg>
<div style="left:1685px;top:99px;width:28px;height:24px;background:#515151;border:1px solid #6a6a6a;border-bottom:none;border-right-color:#333;border-radius:3px 3px 0 0;"></div>
<div style="left:1714px;top:99px;width:28px;height:24px;background:#515151;border:1px solid #6a6a6a;border-bottom:none;border-right-color:#333;border-radius:3px 3px 0 0;"></div>
<div style="left:1743px;top:98px;width:28px;height:25px;background:#545454;border:1px solid #6a6a6a;border-bottom:none;border-right-color:#333;border-radius:3px 3px 0 0;"></div>
<div style="left:1771px;top:99px;width:28px;height:24px;background:#515151;border:1px solid #6a6a6a;border-bottom:none;border-right-color:#333;border-radius:3px 3px 0 0;"></div>
<div style="left:1800px;top:99px;width:28px;height:24px;background:#515151;border:1px solid #6a6a6a;border-bottom:none;border-right-color:#333;border-radius:3px 3px 0 0;"></div>
<div style="left:1829px;top:99px;width:28px;height:24px;background:#515151;border:1px solid #6a6a6a;border-bottom:none;border-right-color:#333;border-radius:3px 3px 0 0;"></div>
<div style="left:1683px;top:122px;width:59px;height:1px;background:#6e6e6e;"></div>
<div style="left:1771px;top:122px;width:148px;height:1px;background:#6e6e6e;"></div>
<svg style="left:1683px;top:96px" width="236" height="28" viewBox="1683 96 236 28"><g transform="translate(1698.500 110)"><circle r="4.500" fill="#b8b8b8"/><path d="M0 -9L1.800 -3.500H-1.800Z" fill="#c4c4c4" transform="rotate(0)"/><path d="M0 -9L1.800 -3.500H-1.800Z" fill="#c4c4c4" transform="rotate(45)"/><path d="M0 -9L1.800 -3.500H-1.800Z" fill="#c4c4c4" transform="rotate(90)"/><path d="M0 -9L1.800 -3.500H-1.800Z" fill="#c4c4c4" transform="rotate(135)"/><path d="M0 -9L1.800 -3.500H-1.800Z" fill="#c4c4c4" transform="rotate(180)"/><path d="M0 -9L1.800 -3.500H-1.800Z" fill="#c4c4c4" transform="rotate(225)"/><path d="M0 -9L1.800 -3.500H-1.800Z" fill="#c4c4c4" transform="rotate(270)"/><path d="M0 -9L1.800 -3.500H-1.800Z" fill="#c4c4c4" transform="rotate(315)"/><path d="M0 -7L1.300 -3.500H-1.300Z" fill="#aaa" transform="rotate(22)"/><path d="M0 -7L1.300 -3.500H-1.300Z" fill="#aaa" transform="rotate(67)"/><path d="M0 -7L1.300 -3.500H-1.300Z" fill="#aaa" transform="rotate(112)"/><path d="M0 -7L1.300 -3.500H-1.300Z" fill="#aaa" transform="rotate(157)"/><path d="M0 -7L1.300 -3.500H-1.300Z" fill="#aaa" transform="rotate(202)"/><path d="M0 -7L1.300 -3.500H-1.300Z" fill="#aaa" transform="rotate(247)"/><path d="M0 -7L1.300 -3.500H-1.300Z" fill="#aaa" transform="rotate(292)"/><path d="M0 -7L1.300 -3.500H-1.300Z" fill="#aaa" transform="rotate(337)"/><circle r="1.300" fill="#555"/></g><rect x="1719.500" y="102.500" width="16" height="16" fill="#5e5e5e" stroke="#d8d8d8" stroke-width="1.200"/><path d="M1722 118C1722 110 1727 105 1735 105M1725 118C1725 112 1729 108 1735 108M1728.500 118C1728.500 114 1731 111.500 1735 111.500" fill="none" stroke="#b0b0b0" stroke-width="1.200"/><circle cx="1719.500" cy="102" r="1.500" fill="#555" stroke="#d8d8d8" stroke-width=".9"/><circle cx="1735.500" cy="118" r="1.500" fill="#555" stroke="#d8d8d8" stroke-width=".9"/><rect x="1751.500" y="100.500" width="10" height="8.500" fill="#6a6a6a" stroke="#d8d8d8" stroke-width="1.100"/><path d="M1756.500 109V114M1749.500 115L1756.500 110.500L1763.500 115" fill="none" stroke="#d8d8d8" stroke-width="1"/><rect x="1747.500" y="114.500" width="4" height="4" fill="#555" stroke="#d8d8d8" stroke-width="1"/><rect x="1754.500" y="114.500" width="4" height="4" fill="#555" stroke="#d8d8d8" stroke-width="1"/><rect x="1761.500" y="114.500" width="4" height="4" fill="#555" stroke="#d8d8d8" stroke-width="1"/><circle cx="1788" cy="110" r="7.500" fill="#6a6a6a" stroke="#e8e8e8" stroke-width="1.800"/><circle cx="1788" cy="110" r="4" fill="none" stroke="#d0d0d0" stroke-width="1.100"/><circle cx="1788" cy="110" r="1.300" fill="#e0e0e0"/><path d="M1778.500 103C1776 107 1776 113 1778.500 117M1776.300 104.500C1774.800 108 1774.800 112 1776.300 115.500" fill="none" stroke="#9a9a9a" stroke-width="1"/><rect x="1805.500" y="101.500" width="19" height="13" fill="#5e5e5e" stroke="#d8d8d8" stroke-width="1.300"/><path d="M1811.500 107L1813.500 105H1819.500V110L1817.500 112H1811.500Z" fill="#777" stroke="#d8d8d8" stroke-width="1"/><path d="M1815 115V117.500M1808 118H1822" stroke="#d8d8d8" stroke-width="1.200"/><path d="M1834.500 117L1846.500 104.500L1848.500 106.500L1836.500 119Z" fill="#aaa" stroke="#d8d8d8" stroke-width="1"/><path d="M1842.500 103.500C1845 101 1849 100.500 1851.500 103L1853.500 105.500L1851.500 107.500L1849.500 105.500L1847 108Z" fill="#e4e4e4"/></svg>
<div class="fld" style="left:1691px;top:129px;width:197px;height:24px;"></div>
<span class="t" style="left:1694.00px;top:132.69px;font-size:11px;line-height:13px;color:#dcdcdc;font-family:'Liberation Sans',sans-serif;transform:scaleX(0.9189);">Skin_Mesh</span>
<div style="left:1895px;top:129px;width:21px;height:24px;background:#e25858;border:1px solid #3a3a3a;border-right-color:#8a8a8a;border-bottom-color:#8a8a8a;"></div>
<div style="left:1691px;top:159px;width:72px;height:26px;background:#646464;border:1px solid #2a2a2a;border-right-color:#7a7a7a;border-bottom-color:#7a7a7a;box-shadow:inset 1px 1px 0 #3e3e3e;"></div>
<span class="t" style="left:1714.50px;top:166.69px;font-size:11px;line-height:13px;color:#dcdcdc;font-family:'Liberation Sans',sans-serif;transform:scaleX(1.0223);">Pivot</span>
<div class="btn" style="left:1769px;top:159px;width:72px;height:26px;"></div>
<span class="t" style="left:1800.00px;top:165.69px;font-size:11px;line-height:13px;color:#dcdcdc;font-family:'Liberation Sans',sans-serif;transform:scaleX(0.9622);">IK</span>
<div class="btn" style="left:1846px;top:159px;width:69px;height:26px;border-right:none;"></div>
<span class="t" style="left:1858.50px;top:165.69px;font-size:11px;line-height:13px;color:#dcdcdc;font-family:'Liberation Sans',sans-serif;transform:scaleX(1.0101);">Link Info</span>
<div style="left:1686px;top:192px;width:225px;height:782px;border:1px solid #2a2a2a;border-left:2px solid #222;border-top:2px solid #222;border-bottom:1px solid #6a6a6a;"></div>
<div style="left:1910px;top:194px;width:4px;height:779px;background:#222;"></div>
<div style="left:1910px;top:830px;width:4px;height:143px;background:#b8b8b8;"></div>
<div style="left:1689px;top:204px;width:219px;height:343px;border:1px solid #2e2e2e;border-top:none;box-shadow:1px 0 0 #626262, inset 1px 0 0 #5c5c5c, 0 1px 0 #626262;"></div>
<div style="left:1693px;top:197px;width:212px;height:15px;background:#3c3c3c;border:1px solid #6c6c6c;"></div>
<div style="left:1697px;top:208px;width:5px;height:1px;background:#f0f0f0;"></div>
<span class="t" style="left:1769.00px;top:198.69px;font-size:11px;line-height:13px;color:#f2f2f2;font-family:'Liberation Sans',sans-serif;transform:scaleX(1.0158);">Adjust Pivot</span>
<div class="grp" style="left:1701px;top:225px;width:198px;height:121px;"></div>
<div style="left:1706px;top:223px;width:101px;height:6px;background:#535353;"></div>
<span class="t" style="left:1709.00px;top:219.69px;font-size:11px;line-height:13px;color:#dcdcdc;font-family:'Liberation Sans',sans-serif;transform:scaleX(0.9897);">Move/Rotate/Scale:</span>
<div class="btn" style="left:1719px;top:245px;width:162px;height:24px;"></div>
<span class="t" style="left:1759.00px;top:250.69px;font-size:11px;line-height:13px;color:#dcdcdc;font-family:'Liberation Sans',sans-serif;transform:scaleX(1.0110);">Affect Pivot Only</span>
<div class="btn" style="left:1719px;top:277px;width:162px;height:24px;"></div>
<span class="t" style="left:1755.50px;top:282.69px;font-size:11px;line-height:13px;color:#dcdcdc;font-family:'Liberation Sans',sans-serif;transform:scaleX(1.0063);">Affect Object Only</span>
<div class="btn" style="left:1719px;top:309px;width:162px;height:24px;"></div>
<span class="t" style="left:1748.00px;top:314.69px;font-size:11px;line-height:13px;color:#dcdcdc;font-family:'Liberation Sans',sans-serif;">Affect Hierarchy Only</span>
<div class="grp" style="left:1701px;top:353px;width:198px;height:118px;"></div>
<div style="left:1706px;top:351px;width:56px;height:6px;background:#535353;"></div>
<span class="t" style="left:1709.00px;top:347.69px;font-size:11px;line-height:13px;color:#dcdcdc;font-family:'Liberation Sans',sans-serif;transform:scaleX(0.9621);">Alignment:</span>
<div class="btn" style="left:1719px;top:373px;width:162px;height:24px;"></div>
<span class="t" style="left:1758.00px;top:378.69px;font-size:11px;line-height:13px;color:#1e1e1e;font-family:'Liberation Sans',sans-serif;transform:scaleX(1.0239);text-shadow:1px 1px 0 #6a6a6a;">Center to Object</span>
<div class="btn" style="left:1719px;top:405px;width:162px;height:24px;"></div>
<span class="t" style="left:1763.50px;top:410.69px;font-size:11px;line-height:13px;color:#1e1e1e;font-family:'Liberation Sans',sans-serif;transform:scaleX(0.9925);text-shadow:1px 1px 0 #6a6a6a;">Align to Object</span>
<div class="btn" style="left:1719px;top:437px;width:162px;height:24px;"></div>
<span class="t" style="left:1765.50px;top:442.69px;font-size:11px;line-height:13px;color:#1e1e1e;font-family:'Liberation Sans',sans-serif;transform:scaleX(0.9814);text-shadow:1px 1px 0 #6a6a6a;">Align to World</span>
<div class="grp" style="left:1701px;top:481px;width:198px;height:57px;"></div>
<div style="left:1706px;top:479px;width:33px;height:6px;background:#535353;"></div>
<span class="t" style="left:1709.00px;top:475.69px;font-size:11px;line-height:13px;color:#dcdcdc;font-family:'Liberation Sans',sans-serif;transform:scaleX(0.9815);">Pivot:</span>
<div class="btn" style="left:1719px;top:499px;width:162px;height:24px;"></div>
<span class="t" style="left:1772.00px;top:504.69px;font-size:11px;line-height:13px;color:#dcdcdc;font-family:'Liberation Sans',sans-serif;">Reset Pivot</span>
<div style="left:1689px;top:562px;width:219px;height:207px;border:1px solid #2e2e2e;border-top:none;box-shadow:1px 0 0 #626262, inset 1px 0 0 #5c5c5c, 0 1px 0 #626262;"></div>
<div style="left:1693px;top:555px;width:212px;height:15px;background:#3c3c3c;border:1px solid #6c6c6c;"></div>
<div style="left:1697px;top:566px;width:5px;height:1px;background:#f0f0f0;"></div>
<span class="t" style="left:1765.00px;top:556.69px;font-size:11px;line-height:13px;color:#f2f2f2;font-family:'Liberation Sans',sans-serif;transform:scaleX(0.9904);">Working Pivot</span>
<div class="btn" style="left:1717px;top:583px;width:162px;height:24px;"></div>
<span class="t" style="left:1754.00px;top:588.69px;font-size:11px;line-height:13px;color:#dcdcdc;font-family:'Liberation Sans',sans-serif;transform:scaleX(0.9815);">Edit Working Pivot</span>
<div class="btn" style="left:1717px;top:615px;width:162px;height:24px;"></div>
<span class="t" style="left:1754.00px;top:620.69px;font-size:11px;line-height:13px;color:#dcdcdc;font-family:'Liberation Sans',sans-serif;transform:scaleX(0.9749);">Use Working Pivot</span>
<div class="btn" style="left:1717px;top:647px;width:100px;height:24px;"></div>
<span class="t" style="left:1735.00px;top:652.69px;font-size:11px;line-height:13px;color:#1e1e1e;font-family:'Liberation Sans',sans-serif;transform:scaleX(0.9599);text-shadow:1px 1px 0 #6a6a6a;">Align To View</span>
<div class="btn" style="left:1821px;top:647px;width:58px;height:24px;"></div>
<span class="t" style="left:1835.00px;top:652.69px;font-size:11px;line-height:13px;color:#1e1e1e;font-family:'Liberation Sans',sans-serif;transform:scaleX(1.0093);text-shadow:1px 1px 0 #6a6a6a;">Reset</span>
<div class="grp" style="left:1717px;top:685px;width:160px;height:76px;"></div>
<div style="left:1722px;top:683px;width:77px;height:6px;background:#535353;"></div>
<span class="t" style="left:1725.00px;top:679.69px;font-size:11px;line-height:13px;color:#dcdcdc;font-family:'Liberation Sans',sans-serif;transform:scaleX(0.9786);">Place Pivot To:</span>
<div class="btn" style="left:1723px;top:703px;width:71px;height:24px;"></div>
<span class="t" style="left:1746.50px;top:708.69px;font-size:11px;line-height:13px;color:#1e1e1e;font-family:'Liberation Sans',sans-serif;transform:scaleX(0.9728);text-shadow:1px 1px 0 #6a6a6a;">View</span>
<div class="btn" style="left:1801px;top:703px;width:71px;height:24px;"></div>
<span class="t" style="left:1817.00px;top:708.69px;font-size:11px;line-height:13px;color:#1e1e1e;font-family:'Liberation Sans',sans-serif;text-shadow:1px 1px 0 #6a6a6a;">Surface</span>
<div style="left:1739px;top:735px;width:13px;height:13px;background:#6a6a6a;border:1px solid #222;border-right-color:#8a8a8a;border-bottom-color:#8a8a8a;box-shadow:inset 1px 1px 0 #333;"></div>
<svg style="left:1740px;top:736px" width="12" height="12" viewBox="0 0 12 12"><path d="M2.500 5.500L5 8.500L9.500 2.500" fill="none" stroke="#f4f4f4" stroke-width="1.700"/></svg>
<span class="t" style="left:1757.00px;top:734.69px;font-size:11px;line-height:13px;color:#dcdcdc;font-family:'Liberation Sans',sans-serif;transform:scaleX(0.9447);">Align To View</span>
<div style="left:1689px;top:784px;width:219px;height:189px;border:1px solid #2e2e2e;border-top:none;border-bottom:none;box-shadow:1px 0 0 #626262, inset 1px 0 0 #5c5c5c;"></div>
<div style="left:1693px;top:777px;width:212px;height:15px;background:#3c3c3c;border:1px solid #6c6c6c;"></div>
<div style="left:1697px;top:788px;width:5px;height:1px;background:#f0f0f0;"></div>
<span class="t" style="left:1757.00px;top:778.69px;font-size:11px;line-height:13px;color:#f2f2f2;font-family:'Liberation Sans',sans-serif;">Adjust Transform</span>
<div class="grp" style="left:1701px;top:805px;width:198px;height:57px;"></div>
<div style="left:1706px;top:803px;width:101px;height:6px;background:#535353;"></div>
<span class="t" style="left:1709.00px;top:799.69px;font-size:11px;line-height:13px;color:#dcdcdc;font-family:'Liberation Sans',sans-serif;transform:scaleX(0.9897);">Move/Rotate/Scale:</span>
<div class="btn" style="left:1715px;top:825px;width:170px;height:24px;"></div>
<span class="t" style="left:1750.00px;top:830.69px;font-size:11px;line-height:13px;color:#dcdcdc;font-family:'Liberation Sans',sans-serif;">Don&#x27;t Affect Children</span>
<div class="grp" style="left:1701px;top:873px;width:198px;height:90px;"></div>
<div style="left:1706px;top:871px;width:37px;height:6px;background:#535353;"></div>
<span class="t" style="left:1709.00px;top:867.69px;font-size:11px;line-height:13px;color:#dcdcdc;font-family:'Liberation Sans',sans-serif;transform:scaleX(0.9751);">Reset:</span>
<div class="btn" style="left:1715px;top:895px;width:170px;height:24px;"></div>
<span class="t" style="left:1774.20px;top:900.69px;font-size:11px;line-height:13px;color:#dcdcdc;font-family:'Liberation Sans',sans-serif;transform:scaleX(0.9858);">Transform</span>
<div class="btn" style="left:1715px;top:927px;width:170px;height:24px;"></div>
<span class="t" style="left:1786.20px;top:932.69px;font-size:11px;line-height:13px;color:#dcdcdc;font-family:'Liberation Sans',sans-serif;transform:scaleX(0.9086);">Scale</span>
<div style="left:1683px;top:974px;width:236px;height:5px;background:#535353;"></div>
<div style="left:1683px;top:979px;width:236px;height:1px;background:#262626;"></div>
<div style="left:1683px;top:980px;width:236px;height:3px;background:#535353;"></div>
<div class="btn" style="left:1px;top:936px;width:15px;height:16px;"></div>
<div class="btn" style="left:141px;top:936px;width:16px;height:16px;"></div>
<div style="left:16px;top:936px;width:125px;height:16px;background:#535353;border:1px solid #3a3a3a;border-right:2px solid #0c0c0c;border-bottom:2px solid #0c0c0c;box-shadow:inset 1px 1px 0 #686868;"></div>
<span class="t" style="left:4.79px;top:937.69px;font-size:11px;line-height:13px;color:#dcdcdc;font-family:'Liberation Sans',sans-serif;">&lt;</span>
<span class="t" style="left:145.29px;top:937.69px;font-size:11px;line-height:13px;color:#dcdcdc;font-family:'Liberation Sans',sans-serif;">&gt;</span>
<span class="t" style="left:60.00px;top:937.69px;font-size:11px;line-height:13px;color:#dcdcdc;font-family:'Liberation Sans',sans-serif;transform:scaleX(1.0108);">0 / 100</span>
<div style="left:50px;top:954px;width:1583px;height:26px;background:#3a3a3a;"></div>
<div style="left:1633px;top:954px;width:49px;height:1px;background:#262626;"></div>
<div style="left:1681px;top:952px;width:1px;height:1px;background:#f0f0f0;"></div>
<div style="left:52px;top:955px;width:8px;height:24px;background:#9a8a2c;border:1px solid #6f6420;"></div>
<svg style="left:0;top:953px" width="1690" height="28" viewBox="0 953 1690 28"><path d="M56.3 954V966M72.0 954V966M87.7 954V966M103.4 954V966M119.1 954V966M134.8 954V966M150.5 954V966M166.1 954V966M181.8 954V966M197.5 954V966M213.2 954V966M228.9 954V966M244.6 954V966M260.3 954V966M276.0 954V966M291.7 954V966M307.4 954V966M323.1 954V966M338.8 954V966M354.4 954V966M370.1 954V966M385.8 954V966M401.5 954V966M417.2 954V966M432.9 954V966M448.6 954V966M464.3 954V966M480.0 954V966M495.7 954V966M511.4 954V966M527.1 954V966M542.8 954V966M558.4 954V966M574.1 954V966M589.8 954V966M605.5 954V966M621.2 954V966M636.9 954V966M652.6 954V966M668.3 954V966M684.0 954V966M699.7 954V966M715.4 954V966M731.1 954V966M746.7 954V966M762.4 954V966M778.1 954V966M793.8 954V966M809.5 954V966M825.2 954V966M840.9 954V966M856.6 954V966M872.3 954V966M888.0 954V966M903.7 954V966M919.4 954V966M935.1 954V966M950.7 954V966M966.4 954V966M982.1 954V966M997.8 954V966M1013.5 954V966M1029.2 954V966M1044.9 954V966M1060.6 954V966M1076.3 954V966M1092.0 954V966M1107.7 954V966M1123.4 954V966M1139.0 954V966M1154.7 954V966M1170.4 954V966M1186.1 954V966M1201.8 954V966M1217.5 954V966M1233.2 954V966M1248.9 954V966M1264.6 954V966M1280.3 954V966M1296.0 954V966M1311.7 954V966M1327.4 954V966M1343.0 954V966M1358.7 954V966M1374.4 954V966M1390.1 954V966M1405.8 954V966M1421.5 954V966M1437.2 954V966M1452.9 954V966M1468.6 954V966M1484.3 954V966M1500.0 954V966M1515.7 954V966M1531.3 954V966M1547.0 954V966M1562.7 954V966M1578.4 954V966M1594.1 954V966M1609.8 954V966M1625.5 954V966" stroke="#7c7c7c" stroke-width="1"/><path d="M134.8 966V979" stroke="#6e6e6e" stroke-width="1"/><path d="M213.2 966V979" stroke="#6e6e6e" stroke-width="1"/><path d="M291.7 966V979" stroke="#6e6e6e" stroke-width="1"/><path d="M370.1 966V979" stroke="#6e6e6e" stroke-width="1"/><path d="M448.6 966V979" stroke="#6e6e6e" stroke-width="1"/><path d="M527.1 966V979" stroke="#6e6e6e" stroke-width="1"/><path d="M605.5 966V979" stroke="#6e6e6e" stroke-width="1"/><path d="M684.0 966V979" stroke="#6e6e6e" stroke-width="1"/><path d="M762.4 966V979" stroke="#6e6e6e" stroke-width="1"/><path d="M840.9 966V979" stroke="#6e6e6e" stroke-width="1"/><path d="M919.4 966V979" stroke="#6e6e6e" stroke-width="1"/><path d="M997.8 966V979" stroke="#6e6e6e" stroke-width="1"/><path d="M1076.3 966V979" stroke="#6e6e6e" stroke-width="1"/><path d="M1154.7 966V979" stroke="#6e6e6e" stroke-width="1"/><path d="M1233.2 966V979" stroke="#6e6e6e" stroke-width="1"/><path d="M1311.7 966V979" stroke="#6e6e6e" stroke-width="1"/><path d="M1390.1 966V979" stroke="#6e6e6e" stroke-width="1"/><path d="M1468.6 966V979" stroke="#6e6e6e" stroke-width="1"/><path d="M1547.0 966V979" stroke="#6e6e6e" stroke-width="1"/><path d="M1625.5 966V979" stroke="#6e6e6e" stroke-width="1"/></svg>
<span class="t" style="left:53.30px;top:966.69px;font-size:11px;line-height:13px;color:#e8d860;font-family:'Liberation Sans',sans-serif;transform:scaleX(0.9809);">0</span>
<span class="t" style="left:131.76px;top:966.69px;font-size:11px;line-height:13px;color:#dcdcdc;font-family:'Liberation Sans',sans-serif;transform:scaleX(0.9809);">5</span>
<span class="t" style="left:207.47px;top:966.69px;font-size:11px;line-height:13px;color:#dcdcdc;font-family:'Liberation Sans',sans-serif;transform:scaleX(0.9400);">10</span>
<span class="t" style="left:285.93px;top:966.69px;font-size:11px;line-height:13px;color:#dcdcdc;font-family:'Liberation Sans',sans-serif;transform:scaleX(0.9400);">15</span>
<span class="t" style="left:364.39px;top:966.69px;font-size:11px;line-height:13px;color:#dcdcdc;font-family:'Liberation Sans',sans-serif;transform:scaleX(0.9400);">20</span>
<span class="t" style="left:442.85px;top:966.69px;font-size:11px;line-height:13px;color:#dcdcdc;font-family:'Liberation Sans',sans-serif;transform:scaleX(0.9400);">25</span>
<span class="t" style="left:521.31px;top:966.69px;font-size:11px;line-height:13px;color:#dcdcdc;font-family:'Liberation Sans',sans-serif;transform:scaleX(0.9400);">30</span>
<span class="t" style="left:599.77px;top:966.69px;font-size:11px;line-height:13px;color:#dcdcdc;font-family:'Liberation Sans',sans-serif;transform:scaleX(0.9400);">35</span>
<span class="t" style="left:678.23px;top:966.69px;font-size:11px;line-height:13px;color:#dcdcdc;font-family:'Liberation Sans',sans-serif;transform:scaleX(0.9400);">40</span>
<span class="t" style="left:756.69px;top:966.69px;font-size:11px;line-height:13px;color:#dcdcdc;font-family:'Liberation Sans',sans-serif;transform:scaleX(0.9400);">45</span>
<span class="t" style="left:835.15px;top:966.69px;font-size:11px;line-height:13px;color:#dcdcdc;font-family:'Liberation Sans',sans-serif;transform:scaleX(0.9400);">50</span>
<span class="t" style="left:913.61px;top:966.69px;font-size:11px;line-height:13px;color:#dcdcdc;font-family:'Liberation Sans',sans-serif;transform:scaleX(0.9400);">55</span>
<span class="t" style="left:992.07px;top:966.69px;font-size:11px;line-height:13px;color:#dcdcdc;font-family:'Liberation Sans',sans-serif;transform:scaleX(0.9400);">60</span>
<span class="t" style="left:1070.53px;top:966.69px;font-size:11px;line-height:13px;color:#dcdcdc;font-family:'Liberation Sans',sans-serif;transform:scaleX(0.9400);">65</span>
<span class="t" style="left:1148.99px;top:966.69px;font-size:11px;line-height:13px;color:#dcdcdc;font-family:'Liberation Sans',sans-serif;transform:scaleX(0.9400);">70</span>
<span class="t" style="left:1227.45px;top:966.69px;font-size:11px;line-height:13px;color:#dcdcdc;font-family:'Liberation Sans',sans-serif;transform:scaleX(0.9400);">75</span>
<span class="t" style="left:1305.91px;top:966.69px;font-size:11px;line-height:13px;color:#dcdcdc;font-family:'Liberation Sans',sans-serif;transform:scaleX(0.9400);">80</span>
<span class="t" style="left:1384.37px;top:966.69px;font-size:11px;line-height:13px;color:#dcdcdc;font-family:'Liberation Sans',sans-serif;transform:scaleX(0.9400);">85</span>
<span class="t" style="left:1462.83px;top:966.69px;font-size:11px;line-height:13px;color:#dcdcdc;font-family:'Liberation Sans',sans-serif;transform:scaleX(0.9400);">90</span>
<span class="t" style="left:1541.29px;top:966.69px;font-size:11px;line-height:13px;color:#dcdcdc;font-family:'Liberation Sans',sans-serif;transform:scaleX(0.9400);">95</span>
<span class="t" style="left:1617.00px;top:966.69px;font-size:11px;line-height:13px;color:#dcdcdc;font-family:'Liberation Sans',sans-serif;transform:scaleX(0.9264);">100</span>
<svg style="left:10px;top:955px" width="24" height="24" viewBox="10 955 24 24"><rect x="13.500" y="959.500" width="16" height="4.500" fill="none" stroke="#f0f0f0" stroke-width="1.200"/><path d="M15 962C17 960.500 19 960.500 21.500 962S26 963.500 28 962" fill="none" stroke="#f0f0f0" stroke-width=".9"/><path d="M17.500 971V966M15.500 968L17.500 966L19.500 968M25.500 966V971M23.500 969L25.500 971L27.500 969" fill="none" stroke="#f0f0f0" stroke-width="1"/><rect x="13.500" y="972.500" width="16" height="2.500" fill="none" stroke="#f0f0f0" stroke-width="1.100"/></svg>
<div style="left:0px;top:980px;width:1683px;height:1px;background:#4a4a4a;"></div>
<div style="left:1px;top:982px;width:98px;height:23px;background:#dcc4c4;border:2px solid #6a6a6a;border-right:1px solid #f4f4f4;border-bottom:1px solid #f4f4f4;"></div>
<div style="left:1px;top:1005px;width:98px;height:24px;background:#fff;border:2px solid #6a6a6a;border-right:1px solid #ddd;border-bottom:1px solid #ddd;"></div>
<span class="t" style="left:7.00px;top:1010.57px;font-size:11px;line-height:13px;color:#8a7068;font-family:'Liberation Mono',monospace;transform:scaleX(1.3633);">MAXScript</span>
<div style="left:103px;top:981px;width:1px;height:49px;background:#3a3a3a;"></div>
<div style="left:104px;top:981px;width:1px;height:49px;background:#6a6a6a;"></div>
<div style="left:107px;top:985px;width:968px;height:20px;background:#535353;border:1px solid #2e2e2e;border-right-color:#6a6a6a;border-bottom-color:#6a6a6a;"></div>
<span class="t" style="left:113.00px;top:988.69px;font-size:11px;line-height:13px;color:#dcdcdc;font-family:'Liberation Sans',sans-serif;transform:scaleX(0.9675);">1 Object Selected</span>
<div style="left:107px;top:1009px;width:1244px;height:21px;background:#535353;border:1px solid #2e2e2e;border-right-color:#6a6a6a;border-bottom-color:#6a6a6a;"></div>
<span class="t" style="left:113.00px;top:1013.69px;font-size:11px;line-height:13px;color:#dcdcdc;font-family:'Liberation Sans',sans-serif;transform:scaleX(0.9911);">Click and drag to select and rotate objects</span>
<svg style="left:1078px;top:984px" width="50" height="22" viewBox="1078 984 50 22">
<path d="M1084.500 993V990.500A3.100 3.100 0 0 1 1090.700 990.500V993" fill="none" stroke="#f0f0f0" stroke-width="1.600"/><rect x="1082.500" y="992.500" width="10.500" height="8.500" rx="1" fill="#5a5a5a" stroke="#f0f0f0" stroke-width="1.300"/><rect x="1087" y="995" width="1.600" height="3.500" fill="#f0f0f0"/>
<rect x="1107.500" y="986.500" width="14" height="14" fill="none" stroke="#f0f0f0" stroke-width="1.300"/><circle cx="1114.500" cy="993.500" r="2.800" fill="none" stroke="#f0f0f0" stroke-width="1.100"/><path d="M1114.500 987V990.500M1114.500 996.500V1000M1108 993.500H1111.500M1117.500 993.500H1121" stroke="#f0f0f0" stroke-width="1.100"/>
</svg>
<span class="t" style="left:1131.00px;top:988.69px;font-size:11px;line-height:13px;color:#dcdcdc;font-family:'Liberation Sans',sans-serif;transform:scaleX(0.8659);">X:</span>
<div class="fld" style="left:1141px;top:984px;width:58px;height:21px;"></div>
<span class="t" style="left:1146.00px;top:988.69px;font-size:11px;line-height:13px;color:#dcdcdc;font-family:'Liberation Sans',sans-serif;transform:scaleX(1.0464);">0,0</span>
<svg style="left:1200px;top:986px" width="12" height="18" viewBox="0 0 12 18"><rect x=".5" y=".5" width="10" height="16" fill="#535353" stroke="#3c3c3c"/><path d="M5.500 3.500L8 6.500H3ZM5.500 13.500L8 10.500H3Z" fill="#e0e0e0"/></svg>
<span class="t" style="left:1213.00px;top:988.69px;font-size:11px;line-height:13px;color:#dcdcdc;font-family:'Liberation Sans',sans-serif;transform:scaleX(0.9196);">Y:</span>
<div class="fld" style="left:1223px;top:984px;width:58px;height:21px;"></div>
<span class="t" style="left:1228.00px;top:988.69px;font-size:11px;line-height:13px;color:#dcdcdc;font-family:'Liberation Sans',sans-serif;transform:scaleX(1.0553);">-0,0</span>
<svg style="left:1282px;top:986px" width="12" height="18" viewBox="0 0 12 18"><rect x=".5" y=".5" width="10" height="16" fill="#535353" stroke="#3c3c3c"/><path d="M5.500 3.500L8 6.500H3ZM5.500 13.500L8 10.500H3Z" fill="#e0e0e0"/></svg>
<span class="t" style="left:1295.00px;top:988.69px;font-size:11px;line-height:13px;color:#dcdcdc;font-family:'Liberation Sans',sans-serif;transform:scaleX(0.9208);">Z:</span>
<div class="fld" style="left:1305px;top:984px;width:58px;height:21px;"></div>
<span class="t" style="left:1310.00px;top:988.69px;font-size:11px;line-height:13px;color:#dcdcdc;font-family:'Liberation Sans',sans-serif;transform:scaleX(1.0581);">-129,5</span>
<svg style="left:1364px;top:986px" width="12" height="18" viewBox="0 0 12 18"><rect x=".5" y=".5" width="10" height="16" fill="#535353" stroke="#3c3c3c"/><path d="M5.500 3.500L8 6.500H3ZM5.500 13.500L8 10.500H3Z" fill="#e0e0e0"/></svg>
<div style="left:1377px;top:985px;width:100px;height:20px;background:#535353;border:1px solid #2e2e2e;border-right-color:#6a6a6a;border-bottom-color:#6a6a6a;"></div>
<span class="t" style="left:1383.00px;top:988.69px;font-size:11px;line-height:13px;color:#dcdcdc;font-family:'Liberation Sans',sans-serif;transform:scaleX(1.0051);">Grid = 10,0</span>
<div class="btn" style="left:1353px;top:1008px;width:21px;height:22px;"></div>
<svg style="left:1355px;top:1011px" width="18" height="18" viewBox="0 0 18 18"><rect x="1.500" y="4.500" width="11" height="11" rx="1.500" fill="none" stroke="#f0f0f0" stroke-width="1.100"/><rect x="4.500" y="1.500" width="11" height="11" rx="1.500" fill="none" stroke="#f0f0f0" stroke-width="1.100"/><path d="M1.800 5L4.800 2M12.300 15.300L15.300 12.300M12.300 5L15.300 2" stroke="#f0f0f0" stroke-width="1"/></svg>
<div style="left:1377px;top:1009px;width:100px;height:21px;background:#535353;border:1px solid #2e2e2e;border-right-color:#6a6a6a;border-bottom-color:#6a6a6a;"></div>
<span class="t" style="left:1383.00px;top:1013.69px;font-size:11px;line-height:13px;color:#dcdcdc;font-family:'Liberation Sans',sans-serif;transform:scaleX(0.9694);">Add Time Tag</span>
<div class="btn" style="left:1481px;top:983px;width:43px;height:44px;"></div>
<svg style="left:1486px;top:995px" width="34" height="20" viewBox="0 0 34 20"><ellipse cx="7.800" cy="9.500" rx="3.300" ry="4" fill="none" stroke="#050505" stroke-width="2.200"/><path d="M11.500 9.500H28.500M23 9.500V13.500M27 9.500V14" stroke="#050505" stroke-width="2.300"/></svg>
<div class="btn" style="left:1528px;top:984px;width:47px;height:21px;"></div>
<span class="t" style="left:1540.00px;top:988.39px;font-size:11px;line-height:13px;color:#dcdcdc;font-family:'Liberation Sans',sans-serif;transform:scaleX(1.0165);">Auto</span>
<div class="btn" style="left:1528px;top:1005px;width:47px;height:22px;"></div>
<span class="t" style="left:1537.00px;top:1010.39px;font-size:11px;line-height:13px;color:#dcdcdc;font-family:'Liberation Sans',sans-serif;transform:scaleX(0.9680);">Set K.</span>
<div style="left:1578px;top:983px;width:115px;height:21px;background:#e1e1e1;border:2px solid #1e1e1e;border-right:1px solid #8a8a8a;border-bottom:1px solid #8a8a8a;"></div>
<span class="t" style="left:1582.00px;top:986.62px;font-size:11.5px;line-height:14px;color:#000;font-family:'Liberation Sans',sans-serif;transform:scaleX(0.9162);">Selected</span>
<svg style="left:1677px;top:989px" width="14" height="9" viewBox="0 0 14 9"><path d="M1.500 1.500L6.500 6.500L11.500 1.500" fill="none" stroke="#222" stroke-width="1.100"/></svg>
<svg style="left:1580px;top:1007px" width="22" height="22" viewBox="1580 1007 22 22"><path d="M1582 1024.500H1587L1590.500 1010.500H1593L1596 1022" fill="none" stroke="#c8c8c8" stroke-width="1.100"/><path d="M1582 1024.500C1586 1024.500 1588 1011 1591.500 1011" fill="none" stroke="#9a9a9a" stroke-width=".9"/><path d="M1598 1026L1601 1023V1026Z" fill="#fff"/></svg>
<div class="btn" style="left:1605px;top:1006px;width:89px;height:21px;"></div>
<span class="t" style="left:1628.50px;top:1010.69px;font-size:11px;line-height:13px;color:#dcdcdc;font-family:'Liberation Sans',sans-serif;transform:scaleX(1.0483);">Filters...</span>
<svg style="left:1698px;top:982px" width="221" height="48" viewBox="1698 982 221 48"><rect x="1702" y="987" width="2.600" height="12.5" rx="1.200" fill="#c8c8c8" stroke="#e6e6e6" stroke-width=".6"/><path d="M1711 988.5V998.0L1705 993.25Z" fill="#b0b0b0" stroke="#e6e6e6" stroke-width="1"/><path d="M1717.5 988.5V998.0L1711.5 993.25Z" fill="#b0b0b0" stroke="#e6e6e6" stroke-width="1"/><path d="M1723.500 986V1002M1795.500 986V1002M1824.500 986V1002M1723.500 1008V1025M1802.500 1008V1025M1824.500 1008V1025" stroke="#262626" stroke-width="1.300"/><path d="M1735.5 989V998L1728 993.5Z" fill="#b0b0b0" stroke="#e6e6e6" stroke-width="1"/><rect x="1737.2" y="988.5" width="2.600" height="10" rx="1.200" fill="#c8c8c8" stroke="#e6e6e6" stroke-width=".6"/><rect x="1741.2" y="988.5" width="2.600" height="10" rx="1.200" fill="#c8c8c8" stroke="#e6e6e6" stroke-width=".6"/><path d="M1754.5 987.5V999.5L1764.0 993.5Z" fill="#a0a0a0" stroke="#e6e6e6" stroke-width="1"/><path d="M1765 1003L1768.500 999.500V1003Z" fill="#fff"/><rect x="1774" y="988.5" width="2.600" height="10" rx="1.200" fill="#c8c8c8" stroke="#e6e6e6" stroke-width=".6"/><rect x="1778" y="988.5" width="2.600" height="10" rx="1.200" fill="#c8c8c8" stroke="#e6e6e6" stroke-width=".6"/><path d="M1782.5 989V998L1790.0 993.5Z" fill="#b0b0b0" stroke="#e6e6e6" stroke-width="1"/><path d="M1800 988.5V998.0L1806 993.25Z" fill="#b0b0b0" stroke="#e6e6e6" stroke-width="1"/><path d="M1806.5 988.5V998.0L1812.5 993.25Z" fill="#b0b0b0" stroke="#e6e6e6" stroke-width="1"/><rect x="1813.2" y="987" width="2.600" height="12.5" rx="1.200" fill="#c8c8c8" stroke="#e6e6e6" stroke-width=".6"/><path d="M1703.500 1011V1023M1717.500 1011V1023" stroke="#e6e6e6" stroke-width="1.300"/><path d="M1710.0 1013.5V1020.5L1705.5 1017.0Z" fill="#9a9a9a" stroke="#e6e6e6" stroke-width="1"/><path d="M1711 1013.5V1020.5L1715.5 1017.0Z" fill="#9a9a9a" stroke="#e6e6e6" stroke-width="1"/><circle cx="1835.500" cy="992.500" r="4.500" fill="#6a6a6a" stroke="#e6e6e6" stroke-width="1.300"/><path d="M1839 996L1843.500 1001" stroke="#e6e6e6" stroke-width="2.200"/><path d="M1841 987.500H1846M1843.500 985V990M1841 992.500H1846" stroke="#e6e6e6" stroke-width="1"/><rect x="1853.500" y="986.500" width="12" height="11" fill="none" stroke="#e6e6e6" stroke-width="1.100"/><path d="M1859.500 986.500V997.500M1853.500 992H1865.500" stroke="#e6e6e6" stroke-width="1"/><circle cx="1863" cy="995.500" r="3" fill="#555" stroke="#e6e6e6" stroke-width="1.100"/><path d="M1865 998L1868.500 1001.500" stroke="#e6e6e6" stroke-width="1.800"/><path d="M1876.500 990V986.500H1880M1886 986.500H1889.500V990M1889.500 996V999.500H1886M1880 999.500H1876.500V996" fill="none" stroke="#e6e6e6" stroke-width="1.200"/><path d="M1879.500 991L1881.500 989H1887V994.500L1885 996.500H1879.500Z" fill="#777" stroke="#e6e6e6" stroke-width="1"/><path d="M1879.500 991H1885V996.500M1885 991L1887 989" fill="none" stroke="#e6e6e6" stroke-width=".9"/><path d="M1889 1003L1892 1000V1003Z" fill="#fff"/><path d="M1904.500 986.500H1914.500V996.500" fill="none" stroke="#e6e6e6" stroke-width="1.100"/><path d="M1904.500 986.500V991M1909.500 986.500V991M1909.500 991.500H1914.500" stroke="#e6e6e6" stroke-width="1"/><path d="M1899.500 994L1902 991.500H1909.500V998L1907 1000.500H1899.500Z" fill="#777" stroke="#e6e6e6" stroke-width="1"/><path d="M1899.500 994H1907V1000.500M1907 994L1909.500 991.500" fill="none" stroke="#e6e6e6" stroke-width=".9"/><path d="M1914 1003L1917 1000V1003Z" fill="#fff"/><rect x="1807.500" y="1009.500" width="12" height="13" rx="1" fill="#5a5a5a" stroke="#e6e6e6" stroke-width="1"/><rect x="1809.500" y="1012" width="3.500" height="3" fill="#e6e6e6"/><rect x="1814.500" y="1012" width="3" height="3" fill="#999"/><path d="M1809.500 1018.500H1813" stroke="#e6e6e6"/><circle cx="1819" cy="1020" r="4.300" fill="#555" stroke="#e6e6e6" stroke-width="1"/><path d="M1819 1017.500V1020H1821" stroke="#e6e6e6" stroke-width=".9" fill="none"/><path d="M1831.500 1010.500L1845.500 1017.500L1831.500 1024.500" fill="none" stroke="#e6e6e6" stroke-width="1.200"/><path d="M1835.500 1012.500C1837 1015.500 1837 1019.500 1835.500 1022.500" fill="none" stroke="#e6e6e6" stroke-width="1"/><path d="M1844.500 1027L1847.500 1024V1027Z" fill="#fff"/><path d="M1856.500 1019L1854.500 1015.500C1854 1014 1856 1013.500 1856.800 1015L1858 1017V1010.500C1858 1009 1860 1009 1860 1010.500V1009.500C1860 1008 1862 1008 1862 1009.500V1010.500C1862 1009 1864 1009 1864 1010.500V1012C1864 1010.800 1866 1010.800 1866 1012V1019C1866 1022 1864.500 1024.500 1862 1024.500H1860C1858.500 1024.500 1857.500 1022 1856.500 1019Z" fill="#666" stroke="#e6e6e6" stroke-width="1"/><path d="M1860 1010.500V1016M1862 1010.500V1016M1864 1012V1016" stroke="#e6e6e6" stroke-width=".8"/><path d="M1867.500 1027L1870.500 1024V1027Z" fill="#fff"/><ellipse cx="1885" cy="1019.500" rx="7" ry="3.300" fill="none" stroke="#e6e6e6" stroke-width="1"/><path d="M1885 1009V1026M1878.500 1025L1891.500 1013" stroke="#e6e6e6" stroke-width="1"/><circle cx="1885" cy="1017.500" r="3.500" fill="none" stroke="#e6e6e6" stroke-width="1"/><path d="M1883.500 1011L1885 1008.500L1886.500 1011Z" fill="#e6e6e6"/><path d="M1892 1027L1895 1024V1027Z" fill="#fff"/><rect x="1900.500" y="1009.500" width="10" height="10" fill="none" stroke="#e6e6e6" stroke-width="1.100"/><rect x="1906.500" y="1015.500" width="8" height="8" fill="#555" stroke="#e6e6e6" stroke-width="1.100"/><path d="M1903 1012L1907.500 1016.500M1903 1015V1012H1906" fill="none" stroke="#e6e6e6" stroke-width="1"/></svg>
<div class="fld" style="left:1725px;top:1006px;width:64px;height:20px;"></div>
<span class="t" style="left:1729.50px;top:1010.19px;font-size:11px;line-height:13px;color:#dcdcdc;font-family:'Liberation Sans',sans-serif;">0</span>
<svg style="left:1790px;top:1009px" width="12" height="18" viewBox="0 0 12 18"><rect x=".5" y=".5" width="9" height="15" fill="#535353" stroke="#3c3c3c"/><path d="M5 3.500L7.500 6.500H2.500ZM5 12.500L7.500 9.500H2.500Z" fill="#e0e0e0"/></svg>
<div style="left:0px;top:1030px;width:1919px;height:49px;background:#1b1b1b;"></div>
<div style="left:682px;top:1030px;width:61px;height:49px;background:#484848;"></div>
<div style="left:253px;top:1077px;width:51px;height:2px;background:#b4d6b2;"></div>
<div style="left:377px;top:1077px;width:51px;height:2px;background:#b4d6b2;"></div>
<div style="left:501px;top:1077px;width:51px;height:2px;background:#b4d6b2;"></div>
<div style="left:682px;top:1077px;width:61px;height:2px;background:#b4d6b2;"></div>
<div style="left:1914px;top:1030px;width:1px;height:49px;background:#8a8a8a;"></div>
<svg style="left:0;top:1030px" width="1919" height="49" viewBox="0 1030 1919 49"><path d="M19.500 1046.800L28.500 1045.500V1053.500H19.500ZM29.700 1045.300L40.500 1043.700V1053.500H29.700ZM19.500 1054.700H28.500V1062.700L19.500 1061.400ZM29.700 1054.700H40.500V1064.500L29.700 1062.900Z" fill="#fff"/><circle cx="93.500" cy="1051" r="9.300" fill="none" stroke="#fff" stroke-width="2.600"/><path d="M87 1058.500L77.500 1068.500" stroke="#fff" stroke-width="3" stroke-linecap="round"/><rect x="140" y="1040" width="28" height="27" rx="4" fill="#0c1e36"/><text x="145" y="1060" font-family="Liberation Sans,sans-serif" font-weight="bold" font-size="16" fill="#31a8ff" textLength="18" lengthAdjust="spacingAndGlyphs">Ps</text><defs><linearGradient id="edA" x1="0" y1="0" x2=".6" y2="1"><stop offset="0" stop-color="#2bc3e8"/><stop offset=".45" stop-color="#1a96dd"/><stop offset="1" stop-color="#0c56a0"/></linearGradient><linearGradient id="edB" x1="0" y1="0" x2="1" y2=".5"><stop offset="0" stop-color="#27b9e6"/><stop offset=".55" stop-color="#3fcb8a"/><stop offset="1" stop-color="#6fdc4e"/></linearGradient></defs>
<circle cx="216" cy="1054.500" r="15" fill="url(#edA)"/>
<path d="M202 1049C204.500 1043 210 1039.500 216.500 1039.500C225 1039.500 231 1046 231 1053C231 1058 228 1060.500 224 1060.500C220.500 1060.500 219 1058.800 220.200 1056.800C222 1053.500 220 1049.300 214.500 1049C209 1048.800 204 1052 202 1057Z" fill="url(#edB)"/>
<path d="M214.500 1049C208.500 1049.500 206 1054.500 207.200 1059.500C208.500 1064.500 213 1068.500 219.500 1069.300C212 1071 204 1066.500 201.800 1059C201 1056 201.200 1052.500 202 1049.800C205 1047 210.500 1046.800 214.500 1049Z" fill="#0e59a8"/>
<path d="M213.300 1056C213 1052.500 216.300 1050.300 219.300 1051C222 1051.800 222.500 1054.500 221 1056.500C219.300 1058.800 220.500 1061.500 224.500 1061.500C227.500 1061.500 229.500 1060.300 230.600 1058.800C230.300 1061 229.500 1063 228.300 1064.300C225.500 1065.800 221.500 1066 218.500 1064.500C215.300 1063 213.500 1059.800 213.300 1056Z" fill="#1b1b1b"/><path d="M264 1048V1044Q264 1042.500 265.500 1042.500H274L276.500 1045H289.500Q291 1045 291 1046.500V1048Z" fill="#e8a41c"/><rect x="264" y="1046.500" width="27" height="19" rx="1.300" fill="#fdd262"/><path d="M264 1062.500H291V1064.200Q291 1065.500 289.700 1065.500H265.300Q264 1065.500 264 1064.200Z" fill="#f0bf48"/><path d="M268.800 1066V1057Q268.800 1055.500 270.300 1055.500H285.500Q287 1055.500 287 1057V1066H283V1059.500H272.800V1066Z" fill="#3d95e0"/><rect x="325" y="1039" width="30" height="31" rx="5" fill="#2d2f7c"/><rect x="330.500" y="1046.500" width="12" height="14" rx="1" fill="none" stroke="#fff" stroke-width="1.300"/><path d="M336.500 1046V1043.500H347.500V1055" fill="none" stroke="#fff" stroke-width="1.300"/><circle cx="334.500" cy="1051.500" r="1.300" fill="#fff"/><path d="M332 1058.500L335.500 1054.500L338.500 1057.500" fill="none" stroke="#fff" stroke-width="1"/><circle cx="346.500" cy="1062" r="7.300" fill="#3b8af0"/><path d="M342.500 1062A4 4 0 1 1 346.500 1066" fill="none" stroke="#fff" stroke-width="1.400"/><path d="M340.500 1060.500H344.800L342.600 1063.800Z" fill="#fff"/><circle cx="401.700" cy="1054" r="14" fill="#2ea6de"/><path d="M392.500 1054L411.500 1046.500L408.500 1062L402.500 1058L399.500 1061.500L399 1056.500L408 1049.500L397 1055.500Z" fill="#fff"/><rect x="400" y="1059" width="19" height="12.500" rx="3" fill="#e93a3a"/><text x="402" y="1069.500" font-family="Liberation Sans,sans-serif" font-size="9.500" fill="#fff" textLength="15.500" lengthAdjust="spacingAndGlyphs">..45</text><defs><linearGradient id="stm" x1="0" y1="0" x2="0" y2="1"><stop offset="0" stop-color="#10203c"/><stop offset=".6" stop-color="#15386a"/><stop offset="1" stop-color="#2a78b8"/></linearGradient></defs><circle cx="463.500" cy="1054" r="14" fill="url(#stm)"/><circle cx="468.500" cy="1050" r="5" fill="none" stroke="#fff" stroke-width="1.700"/><circle cx="468.500" cy="1050" r="2.300" fill="#fff" opacity=".9"/><path d="M449.800 1054.500L458.500 1058L463.800 1053.800L465.500 1055.500L461.500 1060.500" fill="none" stroke="#fff" stroke-width="2.400" stroke-linejoin="round"/><circle cx="459" cy="1060" r="3.600" fill="none" stroke="#fff" stroke-width="1.500"/><circle cx="459" cy="1060" r="1.600" fill="#fff"/><circle cx="525.600" cy="1054.800" r="15" fill="#db4437"/><path d="M525.600 1054.800L512.600 1047.300A15 15 0 0 0 518.100 1067.800Z" fill="#0f9d58"/><path d="M525.600 1054.800L518.100 1067.800A15 15 0 0 0 533.100 1067.800A15 15 0 0 0 540.600 1054.800A15 15 0 0 0 538.590 1047.300Z" fill="#ffcd40"/><path d="M512.610 1047.300A15 15 0 0 1 538.590 1047.300H525.600Z" fill="#db4437"/><path d="M518.100 1067.800A15 15 0 0 1 512.610 1047.300L525.600 1054.800Z" fill="#0f9d58"/><circle cx="525.600" cy="1054.800" r="6.900" fill="#fff"/><circle cx="525.600" cy="1054.800" r="5.500" fill="#4285f4"/><rect x="573" y="1040" width="30" height="30" rx="6" fill="#1d2146"/><path d="M588 1044.500L598 1047.500C598 1056 595 1062 588 1065.500C581 1062 578 1056 578 1047.500Z" fill="none" stroke="#1fb7f0" stroke-width="2.400"/><path d="M588 1046.500L596 1049C596 1056 593.500 1060.500 588 1063.500Z" fill="#1686c7" opacity=".8"/><path d="M583 1059.500L585.500 1053.500L592 1049.500L590.500 1056Z" fill="#1d2146" stroke="#1fb7f0" stroke-width=".8"/><path d="M644.500 1043.500L662.500 1048.500V1062L644.500 1057Z" fill="#55b4ee"/><path d="M644.500 1043.500L662.500 1048.500V1050L644.500 1045Z" fill="#9ad6fa"/><path d="M650 1059.500L656.500 1061.500L657.500 1063.500L649 1061.500Z" fill="#c8c8c8"/><path d="M637 1063.500L649.500 1060.500L658 1065.500L644.500 1068.500Z" fill="#dcdcdc"/><path d="M637 1063.500L644.500 1068.500V1069.500L637 1064.500Z" fill="#9a9a9a"/><defs><linearGradient id="mx" x1="0" y1="0" x2="1" y2="1"><stop offset="0" stop-color="#3aa39d"/><stop offset=".5" stop-color="#0d6a6a"/><stop offset="1" stop-color="#0a4f52"/></linearGradient></defs><rect x="701" y="1040.500" width="21.500" height="27" rx="1.500" fill="url(#mx)"/><path d="M701 1042Q701 1040.500 702.500 1040.500H722.500V1046Q711 1047 701 1054Z" fill="#9fe0da" opacity=".3"/><path d="M716 1047.500C710 1047 704.500 1048.500 704.500 1054C704.500 1059 707 1061.500 711.500 1061C716 1060.500 719 1059 718.500 1054.500C718 1051 714.500 1050.500 711.500 1051C708.500 1051.500 708 1054 709 1056C710 1058 713 1058 714.500 1057C716 1056 715.500 1054.500 714 1054" fill="none" stroke="#fff" stroke-width="1.500" stroke-linecap="round"/><defs><linearGradient id="cl" x1="0" y1="0" x2="0" y2="1"><stop offset="0" stop-color="#eef4fb"/><stop offset="1" stop-color="#9fc0ee"/></linearGradient></defs><path d="M1243 1040.500C1245.500 1044.500 1244.500 1050 1240 1052.500C1237.500 1054 1234 1054 1231.500 1052.500C1234 1057 1240 1058.500 1244.500 1055.500C1249.500 1052.500 1249 1044 1243 1040.500Z" fill="#f4a32a"/><path d="M1236 1068.500C1228 1068.500 1227.500 1059 1234.500 1058C1235 1052 1243 1050 1246.500 1055C1251.500 1052.500 1257 1056 1256 1061C1261.500 1061.500 1261.500 1068.500 1256 1068.500Z" fill="url(#cl)"/><circle cx="1256.500" cy="1043.600" r="3.500" fill="#d9302c"/><path d="M1468 1046L1477 1048.500C1477 1056 1474.500 1061.500 1468 1064.500C1461.500 1061.500 1459 1056 1459 1048.500Z" fill="none" stroke="#2a8fe6" stroke-width="2.400"/><path d="M1464 1060L1466 1055L1472 1051L1470.500 1057Z" fill="#2a8fe6"/><circle cx="1473" cy="1060.500" r="4.600" fill="#e0484a"/><circle cx="1473" cy="1060.500" r="2" fill="#f3a8a8"/><path d="M1489 1057C1492 1056.500 1494 1052 1498.500 1051C1503 1052 1505 1056.500 1508 1057Z" fill="#343434"/><path d="M1528 1045.500L1537 1048V1053C1537 1059 1533.500 1063 1528 1065.500C1522.500 1063 1519 1059 1519 1053V1048Z" fill="#fff"/><path d="M1528 1045.500V1054.500H1519V1048ZM1528 1054.500H1537C1537 1059 1533.500 1063 1528 1065.500Z" fill="#1b1b1b" opacity=".85"/><path d="M1528 1045.500L1537 1048V1053C1537 1059 1533.500 1063 1528 1065.500C1522.500 1063 1519 1059 1519 1053V1048Z" fill="none" stroke="#fff" stroke-width="1.300"/><circle cx="1533.500" cy="1061" r="5" fill="#e5252a"/><path d="M1531.300 1058.800L1535.700 1063.200M1535.700 1058.800L1531.300 1063.200" stroke="#fff" stroke-width="1.400"/><rect x="1550" y="1047" width="15" height="15" fill="none" stroke="#1a9fe8" stroke-width="2.400" stroke-dasharray="3.500 2"/><path d="M1560 1064.500H1568M1565.500 1060.500V1067.500" stroke="#1a9fe8" stroke-width="2"/><path d="M1580.500 1054C1583 1050 1587 1048.500 1590 1048.500V1046.500H1597.500V1060H1590C1586 1060 1583 1057.500 1580.500 1054Z" fill="#76b900"/><path d="M1583.500 1054C1585.500 1051.500 1588 1050.800 1590 1051V1057.500C1587.500 1057.500 1585.500 1056.500 1583.500 1054Z" fill="#1b1b1b"/><circle cx="1588" cy="1054" r="1.700" fill="#76b900"/><circle cx="1593.500" cy="1061" r="5.300" fill="#1b1b1b" stroke="#e8e8e8" stroke-width="1" stroke-dasharray="2.500 1.200"/><path d="M1593.500 1057.500V1062M1591.300 1060.300L1593.500 1062.500L1595.700 1060.300M1591 1064H1596" stroke="#fff" stroke-width="1.100" fill="none"/><path d="M1608.500 1051.500H1611.500L1616 1047V1063L1611.500 1058.500H1608.500Z" fill="none" stroke="#fff" stroke-width="1.200" stroke-linejoin="round"/><path d="M1619 1052C1620.300 1053.500 1620.300 1056.500 1619 1058M1622 1049.500C1624.500 1052.500 1624.500 1057.500 1622 1060.500M1625 1047C1629 1051.500 1629 1058.500 1625 1063" fill="none" stroke="#fff" stroke-width="1.200"/><path d="M1643 1061.500C1637.500 1061.500 1637.500 1055 1642 1054.500C1642.500 1050 1648.500 1048.500 1651 1052C1654.500 1050.500 1658 1053 1657.500 1056.500C1660 1057.500 1659.500 1061.500 1656.500 1061.500Z" fill="#8a8a8a"/><path d="M1641 1047.500L1656.500 1063" stroke="#1b1b1b" stroke-width="3"/><path d="M1641 1047L1656.500 1062.500" stroke="#c8c8c8" stroke-width="1.300"/><path d="M1668.500 1052.500H1672L1678.500 1046.500V1064L1672 1058H1668.500Z" fill="#e0623a"/><path d="M1678.500 1046.500V1064L1676 1061.700V1048.800Z" fill="#b84424"/><path d="M1681.500 1051C1683.300 1053.500 1683.300 1057 1681.500 1059.500M1684.500 1048.500C1687.500 1052.500 1687.500 1058 1684.500 1062" fill="none" stroke="#6e2414" stroke-width="1.200"/><rect x="1700.500" y="1047.500" width="17" height="11.500" fill="none" stroke="#fff" stroke-width="1.300"/><path d="M1709 1059V1062.500M1704.500 1063H1713.500" stroke="#fff" stroke-width="1.300"/><rect x="1698.500" y="1048.500" width="3.500" height="4" fill="#1b1b1b" stroke="#fff" stroke-width="1"/><path d="M1700.200 1052.500V1060H1703" fill="none" stroke="#fff" stroke-width="1"/><rect x="1733.500" y="1045" width="8" height="13.500" rx="3" fill="#fff"/><path d="M1731.200 1054.500C1731.200 1062.500 1743.800 1062.500 1743.800 1054.500M1737.500 1060.800V1064.300M1734.500 1064.500H1740.500" fill="none" stroke="#fff" stroke-width="1.200"/><circle cx="1768" cy="1054.600" r="10" fill="#2ea6de"/><path d="M1761.500 1054.500L1775 1049L1773 1060L1768.500 1057.500L1766.500 1060L1766 1056.500L1772.500 1051.500L1764.500 1055.500Z" fill="#fff"/><circle cx="1775" cy="1060" r="5" fill="#e93a3a"/><text x="1771.300" y="1062.500" font-family="Liberation Sans,sans-serif" font-size="6.500" fill="#fff">..5</text></svg>
<span class="t" style="left:1271.00px;top:1045.09px;font-size:18.5px;line-height:22px;color:#fff;font-family:'Liberation Sans',sans-serif;transform:scaleX(0.8589);">19°C</span>
<span class="t" style="left:1318.50px;top:1045.09px;font-size:18.5px;line-height:22px;color:#fff;font-family:'Liberation Sans',sans-serif;transform:scaleX(0.9816);">Mostly cloudy</span>
<span class="t" style="left:1792.50px;top:1047.08px;font-size:14.5px;line-height:17px;color:#fff;font-family:'Liberation Sans',sans-serif;transform:scaleX(0.8782);">РУС</span>
<span class="t" style="left:1853.50px;top:1035.55px;font-size:14.3px;line-height:17px;color:#fff;font-family:'Liberation Sans',sans-serif;transform:scaleX(0.9502);">20:43</span>
<span class="t" style="left:1838.00px;top:1058.25px;font-size:14.3px;line-height:17px;color:#fff;font-family:'Liberation Sans',sans-serif;transform:scaleX(0.9432);">14.05.2023</span>
<svg style="left:1163px;top:945px" width="20" height="28" viewBox="1163 945 20 28"><path d="M1165.500 947.500V967.200L1169.900 963.300L1173.500 970.600L1176.300 969.300L1172.800 962.200L1179.300 961.600Z" fill="#fff" stroke="#000" stroke-width="1.100" stroke-linejoin="miter"/></svg>
</div>
</body></html>
